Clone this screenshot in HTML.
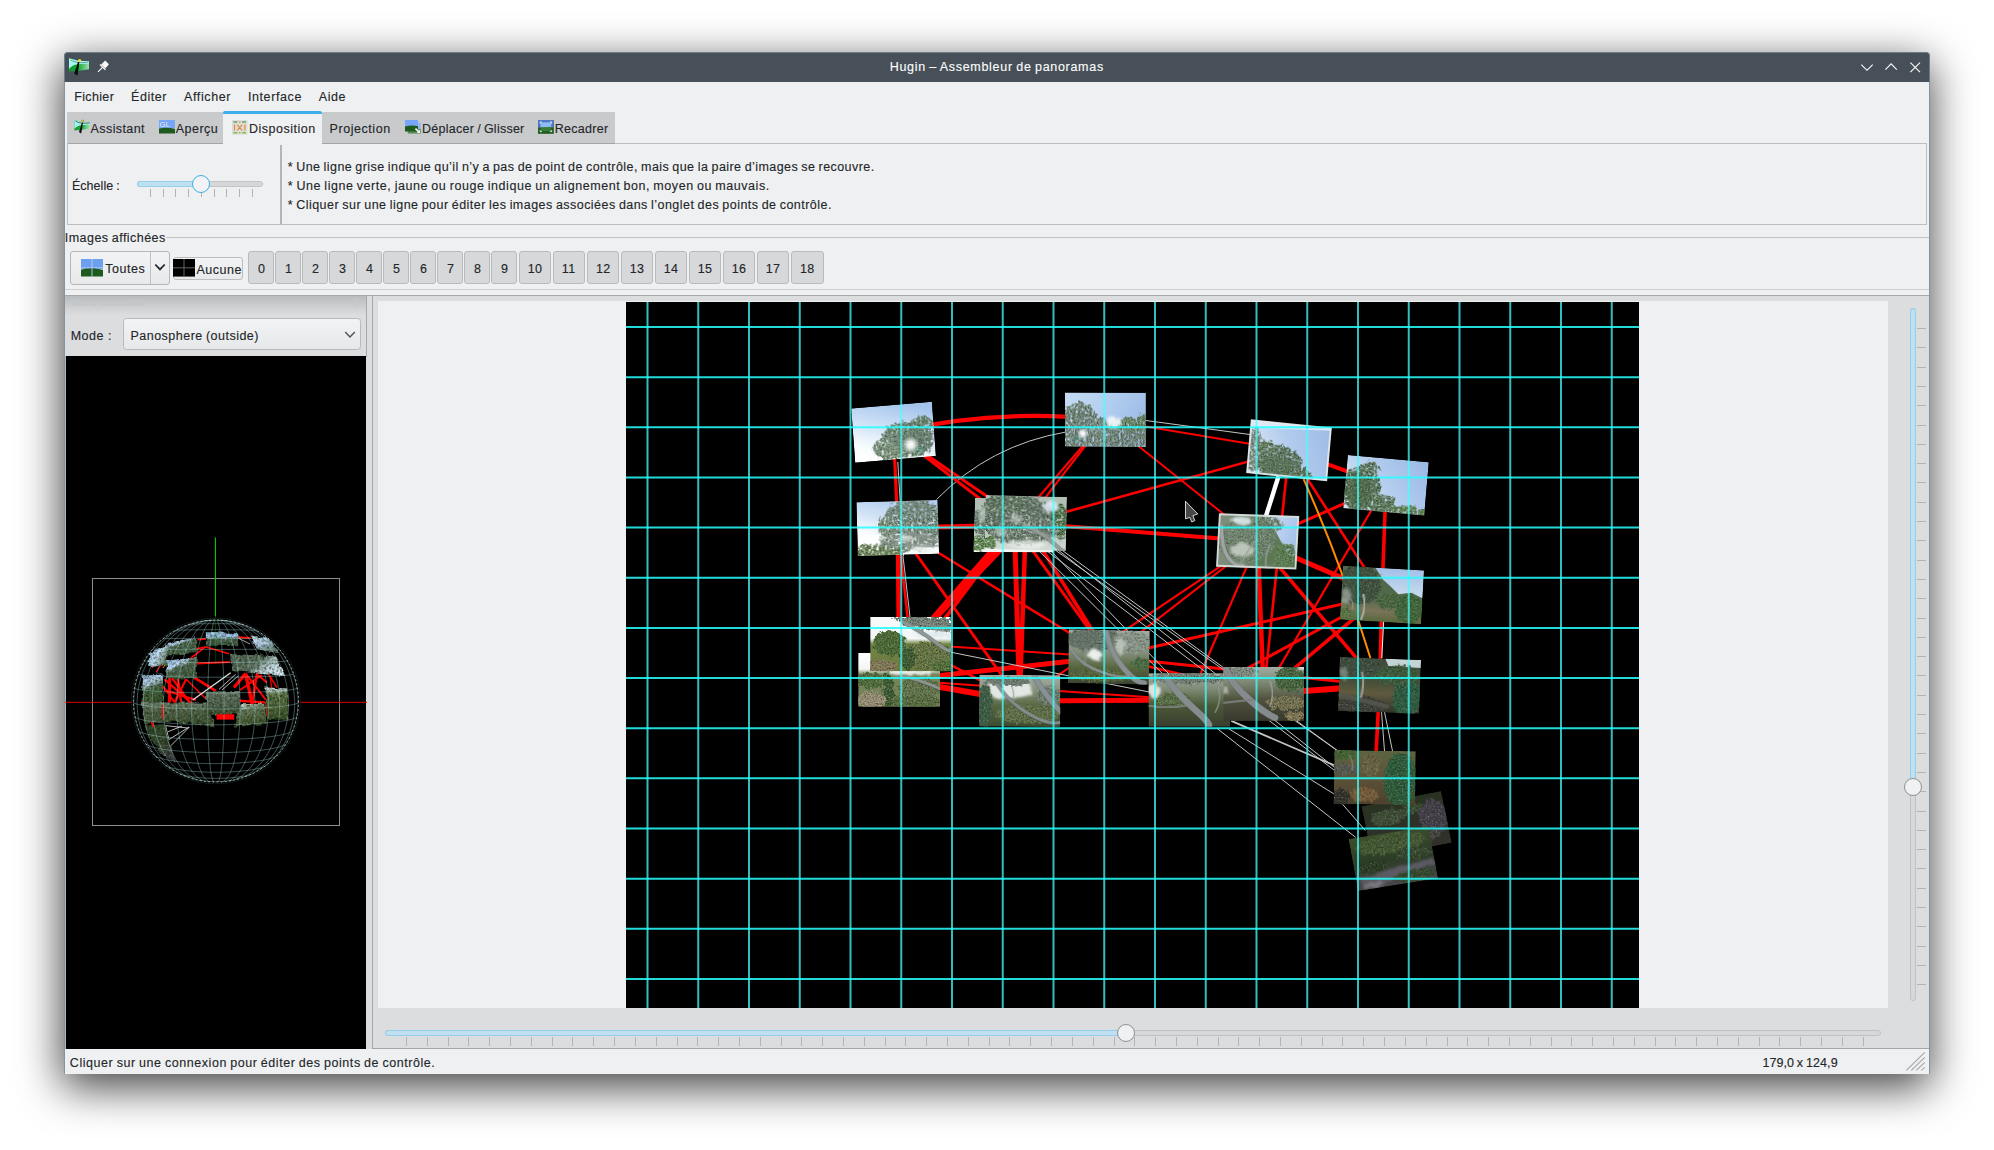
<!DOCTYPE html>
<html>
<head>
<meta charset="utf-8">
<title>Hugin</title>
<style>
*{box-sizing:border-box;margin:0;padding:0}
html,body{width:1994px;height:1150px;overflow:hidden;background:#fff}
body{position:relative;font-family:"Liberation Sans",sans-serif;font-size:12.5px;color:#232629}
.abs{position:absolute}
.t{position:absolute;white-space:nowrap;line-height:16px;height:16px;-webkit-text-stroke:0.13px #232629}
#win{position:absolute;left:64px;top:52px;width:1866px;height:1022px;background:#eff0f1;border-radius:4px 4px 0 0;border:1px solid #8693a0;
 box-shadow:-1px 12px 44px 1px rgba(0,0,0,.75)}
#title{position:absolute;left:64px;top:52px;width:1866px;height:29.5px;background:#475059;border-radius:4px 4px 0 0;border:1px solid #6e7c8b;border-bottom:none}
.btn{position:absolute;border:1px solid #b9babc;border-radius:3px;background:#d7d8da;height:33px;top:250.7px}
svg{position:absolute;overflow:visible}
</style>
</head>
<body>
<div id="win"></div>
<div id="title"></div>

<div class="t" style="left:889.70px;top:59.17px;letter-spacing:0.70px;word-spacing:-0.7px;color:#fcfcfc;-webkit-text-stroke-color:#fcfcfc;">Hugin – Assembleur de panoramas</div>
<svg style="left:1855px;top:56px" width="72" height="22" viewBox="1855 56 72 22" fill="none" stroke="#fcfcfc" stroke-width="1.1">
<path d="M1861.3 64.6 L1867 70.3 L1872.7 64.6"/>
<path d="M1885.4 69.6 L1891.1 63.9 L1896.8 69.6"/>
<path d="M1910.4 62.6 L1920 72.2 M1920 62.6 L1910.4 72.2"/>
</svg>
<svg style="left:68px;top:56px" width="44" height="22" viewBox="68 56 44 22">
<defs><linearGradient id="ig" x1="0" x2="1"><stop offset="0" stop-color="#0a9a28"/><stop offset=".45" stop-color="#10a530"/><stop offset="1" stop-color="#a0e0b0"/></linearGradient></defs>
<path d="M69 58.2 L78.5 60.8 L89 61.2 L89 69.3 L78 71 L69 71.6 Z" fill="url(#ig)"/>
<path d="M69 58.2 L78.5 60.8 L89 61.2 L89 63.6 L78 64.2 C74 64.6 71 66.5 69 69 Z" fill="#a8f4f0"/>
<path d="M70.5 59.8 C73 61.5 76 62.3 79 62.6 C82 62.9 86 62.5 88.5 62" stroke="#2a6a6a" stroke-width=".6" fill="none"/>
<path d="M79.4 62 L77.4 75.8 L75.8 74.6 L74.2 73.4 L78 62 Z" fill="#0a0a0a"/>
<circle cx="79.6" cy="60.4" r="1.5" fill="#f0e020"/>
<g fill="#fcfcfc"><path d="M105.2 60.6 L108.9 64.3 L105.3 68.6 L101.2 64.6 Z"/><path d="M99.6 64.9 L100.5 64 L105.9 69.4 L105 70.3 Z"/><path d="M102.1 66.9 L103 67.8 L98.3 72.3 L97.6 71.6 Z"/></g>
</svg>
<div class="t" style="left:74.20px;top:88.67px;letter-spacing:0.35px;">Fichier</div>
<div class="t" style="left:131.00px;top:88.67px;letter-spacing:0.56px;">Éditer</div>
<div class="t" style="left:184.00px;top:88.67px;letter-spacing:0.61px;">Afficher</div>
<div class="t" style="left:247.90px;top:88.67px;letter-spacing:0.60px;">Interface</div>
<div class="t" style="left:318.80px;top:88.67px;letter-spacing:0.57px;">Aide</div>
<div class="abs" style="left:67.00px;top:111.50px;width:548.00px;height:32.00px;background:#c9cacc;"></div>
<div class="abs" style="left:67.00px;top:143.00px;width:548.00px;height:1.00px;background:#a4a5a7;"></div>
<div class="abs" style="left:615.00px;top:143.00px;width:1312.00px;height:1.00px;background:#bcbdbf;"></div>
<div class="abs" style="left:67.00px;top:143.00px;width:1.00px;height:82.00px;background:#bcbdbf;"></div>
<div class="abs" style="left:1926.00px;top:143.00px;width:1.00px;height:82.00px;background:#bcbdbf;"></div>
<div class="abs" style="left:67.00px;top:224.00px;width:1860.00px;height:1.00px;background:#bcbdbf;"></div>
<div class="abs" style="left:223.00px;top:111.50px;width:99.00px;height:33.00px;background:#eff0f1;"></div>
<div class="abs" style="left:223.00px;top:111.20px;width:99.00px;height:3.00px;background:#3daee9;border-radius:2px 2px 0 0"></div>
<div class="t" style="left:90.60px;top:120.67px;letter-spacing:0.40px;">Assistant</div>
<div class="t" style="left:175.80px;top:120.67px;letter-spacing:0.48px;">Aperçu</div>
<div class="t" style="left:248.90px;top:120.67px;letter-spacing:0.52px;">Disposition</div>
<div class="t" style="left:329.60px;top:120.67px;letter-spacing:0.55px;">Projection</div>
<div class="t" style="left:422.10px;top:120.67px;letter-spacing:0.25px;word-spacing:-0.7px;">Déplacer / Glisser</div>
<div class="t" style="left:554.80px;top:120.67px;letter-spacing:0.28px;">Recadrer</div>
<svg style="left:73.6px;top:119.4px" width="16.4" height="15" viewBox="0 0 16.4 15">
<defs><linearGradient id="ig2" x1="0" x2="1"><stop offset="0" stop-color="#18a030"/><stop offset=".5" stop-color="#22a83c"/><stop offset="1" stop-color="#a8e4b4"/></linearGradient></defs>
<path d="M.4 1 L8 3 L16 3.4 L16 9.6 L8 10.8 L.4 11.4 Z" fill="url(#ig2)"/><path d="M.4 1 L8 3 L16 3.4 L16 5.6 L9 6 C5.5 6.2 2.6 7.6 .4 9.6 Z" fill="#a6f2ec"/>
<path d="M1.6 2.2 C4 3.6 7 4.3 9.4 4.3 C12 4.3 14.5 4 15.8 3.8" stroke="#1c3c3c" stroke-width=".7" fill="none"/>
<path d="M9 3.4 L7.2 14.6 L6 13.8 L5 13 L8 3.6 Z" fill="#0a0a0a"/><circle cx="8.8" cy="2.2" r="1.15" fill="#f0e020" stroke="#222" stroke-width=".3"/></svg>
<svg style="left:159px;top:120.4px" width="16" height="13.4" viewBox="0 0 16 13.4">
<rect width="16" height="8.6" fill="#78a6f6"/><path d="M0 8.6 C5 7.4 10 7.4 16 8.9 V13.4 H0Z" fill="#1e5a1e"/>
<text x=".6" y="6.6" font-family="Liberation Sans" font-size="7.6" fill="#e4eeff">GL</text></svg>
<svg style="left:232.2px;top:119.6px" width="15.4" height="14.8" viewBox="0 0 16 15">
<rect width="16" height="15" fill="#dcdcd6"/>
<g fill="#70c040"><rect x="1.5" y="1.4" width="4" height="1.4"/><rect x="10.5" y="1.4" width="4" height="1.4"/><rect x="1.5" y="12.4" width="4" height="1.4"/><rect x="10.5" y="12.4" width="4" height="1.4"/></g>
<g fill="#6a94d8"><rect x="1.5" y="1" width="4" height=".7"/><rect x="10.5" y="1" width="4" height=".7"/></g>
<g fill="#e89040"><rect x="7.2" y="1.2" width="1.6" height="1.4"/><rect x="7.2" y="12.4" width="1.6" height="1.4"/></g>
<g stroke="#e08838" stroke-width="1.1" fill="none"><path d="M2.6 4.6V10.8M13.4 4.6V10.8M5.4 4.8L10.6 10.6M10.6 4.8L5.4 10.6"/></g></svg>
<svg style="left:405px;top:120.1px" width="16" height="13.9" viewBox="0 0 16 13.9">
<rect x="2.8" y="2.4" width="13" height="7" fill="#94b8ee"/><rect x="2.8" y="9" width="13" height="4.6" fill="#5c8c5c"/>
<rect x="0" y="0" width="13" height="7.6" fill="#78a6f6"/><path d="M0 6.6 C4 5.4 9 5.2 13 6.2 V11.6 H0Z" fill="#1e5a1e"/>
<path d="M10.4 8.6 L13.4 11.4" stroke="#f6f6f6" stroke-width="1.7"/><path d="M15 12.9 V9.6 L11.8 12.9 Z" fill="#f6f6f6"/></svg>
<svg style="left:538px;top:120.1px" width="15.8" height="13.8" viewBox="0 0 16 14">
<rect width="16" height="14" fill="#1e5a1e"/><rect x="0" y="0" width="16" height="7.6" fill="#5278c4"/>
<rect x="2.6" y="2.4" width="10.8" height="5.2" fill="#8ebcfc"/><path d="M2.6 7.6 L13.4 6.8 V11.4 H2.6Z" fill="#3a7a3a"/>
<path d="M2.2 3.6V2H4M12 2H13.8V3.6M13.8 10.2V11.8H12M4 11.8H2.2V10.2" fill="none" stroke="#e8f0fc" stroke-width=".9"/></svg>
<div class="abs" style="left:280.20px;top:145.00px;width:1.60px;height:79.00px;background:#b4b5b7;"></div>
<div class="t" style="left:71.90px;top:177.67px;letter-spacing:0.06px;word-spacing:-0.7px;">Échelle :</div>
<div class="t" style="left:287.70px;top:158.67px;letter-spacing:0.43px;word-spacing:-0.7px;">* Une ligne grise indique qu’il n’y a pas de point de contrôle, mais que la paire d’images se recouvre.</div>
<div class="t" style="left:287.70px;top:177.67px;letter-spacing:0.55px;word-spacing:-0.7px;">* Une ligne verte, jaune ou rouge indique un alignement bon, moyen ou mauvais.</div>
<div class="t" style="left:287.70px;top:196.67px;letter-spacing:0.46px;word-spacing:-0.7px;">* Cliquer sur une ligne pour éditer les images associées dans l’onglet des points de contrôle.</div>
<div class="abs" style="left:137.00px;top:181.00px;width:126.00px;height:6.00px;background:#d6d7d8;border-radius:3px;border:1px solid #c3c4c6"></div>
<div class="abs" style="left:137.00px;top:181.00px;width:66.00px;height:6.00px;background:#bfe0f0;border-radius:3px;border:1px solid #98cfea"></div>
<div class="abs" style="left:150.00px;top:188.50px;width:1.00px;height:8.50px;background:#b0b1b3;"></div>
<div class="abs" style="left:162.72px;top:188.50px;width:1.00px;height:8.50px;background:#b0b1b3;"></div>
<div class="abs" style="left:175.44px;top:188.50px;width:1.00px;height:8.50px;background:#b0b1b3;"></div>
<div class="abs" style="left:188.16px;top:188.50px;width:1.00px;height:8.50px;background:#b0b1b3;"></div>
<div class="abs" style="left:200.88px;top:188.50px;width:1.00px;height:8.50px;background:#b0b1b3;"></div>
<div class="abs" style="left:213.60px;top:188.50px;width:1.00px;height:8.50px;background:#b0b1b3;"></div>
<div class="abs" style="left:226.32px;top:188.50px;width:1.00px;height:8.50px;background:#b0b1b3;"></div>
<div class="abs" style="left:239.04px;top:188.50px;width:1.00px;height:8.50px;background:#b0b1b3;"></div>
<div class="abs" style="left:251.76px;top:188.50px;width:1.00px;height:8.50px;background:#b0b1b3;"></div>
<div class="abs" style="left:192.00px;top:175.00px;width:18.00px;height:18.00px;background:#f2f3f4;border-radius:50%;border:1.3px solid #3daee9"></div>
<div class="t" style="left:64.80px;top:229.67px;letter-spacing:0.46px;word-spacing:-0.7px;">Images affichées</div>
<div class="abs" style="left:166.00px;top:237.00px;width:1763.00px;height:1.00px;background:#c0c1c3;"></div>
<div class="abs" style="left:65.00px;top:289.00px;width:1864.00px;height:1.00px;background:#d0d1d3;"></div>
<div class="btn" style="left:69.8px;width:99.8px;height:34px;background:linear-gradient(#f2f3f4,#e8e9ea);border-color:#b6b7b9"></div>
<div class="abs" style="left:150.30px;top:251.70px;width:1.00px;height:32.00px;background:#c0c1c3;"></div>
<svg style="left:81px;top:259.3px" width="22" height="17.6" viewBox="0 0 23 19" preserveAspectRatio="none">
<rect width="23" height="11" fill="#6ea0f0"/><path d="M0 11.5 C7 9.5 15 9.5 23 11.8 V19 H0Z" fill="#1e5a1e"/><path d="M11.5 0V19M0 9.5H23" stroke="#b8d0f8" stroke-width="1.2" opacity=".75"/></svg>
<div class="t" style="left:105.20px;top:260.67px;letter-spacing:0.53px;">Toutes</div>
<svg style="left:153.6px;top:263.4px" width="12" height="9" viewBox="0 0 12 9"><path d="M1.3 1.5 L6 6.4 L10.7 1.5" fill="none" stroke="#232629" stroke-width="1.8"/></svg>
<div class="btn" style="left:172.5px;width:70px;top:256.5px;height:23px;background:linear-gradient(#f2f3f4,#e8e9ea);border-color:#bcbdbf"></div>
<svg style="left:173px;top:259.3px" width="22" height="17.6" viewBox="0 0 23 19" preserveAspectRatio="none"><rect width="23" height="19" fill="#000"/><path d="M11.5 0V19M0 9.5H23" stroke="#6a6a6a" stroke-width="1"/></svg>
<div class="t" style="left:196.50px;top:261.67px;letter-spacing:0.52px;">Aucune</div>
<div class="btn" style="left:248.30px;width:26.20px"></div>
<div class="t" style="left:258.00px;top:260.67px;letter-spacing:0.00px;">0</div>
<div class="btn" style="left:275.30px;width:26.20px"></div>
<div class="t" style="left:285.00px;top:260.67px;letter-spacing:0.00px;">1</div>
<div class="btn" style="left:302.30px;width:26.20px"></div>
<div class="t" style="left:312.00px;top:260.67px;letter-spacing:0.00px;">2</div>
<div class="btn" style="left:329.30px;width:26.20px"></div>
<div class="t" style="left:339.00px;top:260.67px;letter-spacing:0.00px;">3</div>
<div class="btn" style="left:356.30px;width:26.20px"></div>
<div class="t" style="left:366.00px;top:260.67px;letter-spacing:0.00px;">4</div>
<div class="btn" style="left:383.30px;width:26.20px"></div>
<div class="t" style="left:393.00px;top:260.67px;letter-spacing:0.00px;">5</div>
<div class="btn" style="left:410.30px;width:26.20px"></div>
<div class="t" style="left:420.00px;top:260.67px;letter-spacing:0.00px;">6</div>
<div class="btn" style="left:437.30px;width:26.20px"></div>
<div class="t" style="left:447.00px;top:260.67px;letter-spacing:0.00px;">7</div>
<div class="btn" style="left:464.30px;width:26.20px"></div>
<div class="t" style="left:474.00px;top:260.67px;letter-spacing:0.00px;">8</div>
<div class="btn" style="left:491.30px;width:26.20px"></div>
<div class="t" style="left:501.00px;top:260.67px;letter-spacing:0.00px;">9</div>
<div class="btn" style="left:518.50px;width:32.80px"></div>
<div class="t" style="left:527.75px;top:260.67px;letter-spacing:0.30px;">10</div>
<div class="btn" style="left:552.60px;width:32.80px"></div>
<div class="t" style="left:561.85px;top:260.67px;letter-spacing:0.30px;">11</div>
<div class="btn" style="left:586.70px;width:32.80px"></div>
<div class="t" style="left:595.95px;top:260.67px;letter-spacing:0.30px;">12</div>
<div class="btn" style="left:620.60px;width:32.80px"></div>
<div class="t" style="left:629.85px;top:260.67px;letter-spacing:0.30px;">13</div>
<div class="btn" style="left:654.60px;width:32.80px"></div>
<div class="t" style="left:663.85px;top:260.67px;letter-spacing:0.30px;">14</div>
<div class="btn" style="left:688.60px;width:32.80px"></div>
<div class="t" style="left:697.85px;top:260.67px;letter-spacing:0.30px;">15</div>
<div class="btn" style="left:722.50px;width:32.80px"></div>
<div class="t" style="left:731.75px;top:260.67px;letter-spacing:0.30px;">16</div>
<div class="btn" style="left:756.60px;width:32.80px"></div>
<div class="t" style="left:765.85px;top:260.67px;letter-spacing:0.30px;">17</div>
<div class="btn" style="left:790.80px;width:32.80px"></div>
<div class="t" style="left:800.05px;top:260.67px;letter-spacing:0.30px;">18</div>
<div class="abs" style="left:65.00px;top:295.00px;width:1864.00px;height:753.50px;background:#dcdddf;"></div>
<div class="abs" style="left:65.00px;top:295.00px;width:1864.00px;height:1.00px;background:#a8a9ab;"></div>
<div class="abs" style="left:65.00px;top:296.00px;width:301.50px;height:19.00px;background:linear-gradient(#b9bbbc,#dcdddf);"></div>
<div class="abs" style="left:366.00px;top:295.00px;width:1.00px;height:62.00px;background:#a8a9ab;"></div>
<div class="t" style="left:70.50px;top:294.97px;letter-spacing:0.07px;word-spacing:-0.7px;color:#c2c7cc;-webkit-text-stroke-color:#c2c7cc;font-size:10.4px">Vue d’ensemble</div>
<svg style="left:352px;top:298px" width="10" height="12" viewBox="0 0 10 12"><path d="M2.6 .8H6.6V5.6H2.6ZM.8 6.4H8.4M4.6 6.6V10.6" stroke="#c6cbd1" stroke-width="1" fill="none"/></svg>
<div class="t" style="left:70.70px;top:327.67px;letter-spacing:0.51px;">Mode :</div>
<div class="abs" style="left:122.50px;top:318.00px;width:238.00px;height:32.40px;background:linear-gradient(#f2f3f4,#e7e8e9);border:1px solid #b9babc;border-radius:3.5px"></div>
<div class="t" style="left:130.50px;top:327.67px;letter-spacing:0.48px;word-spacing:-0.7px;">Panosphere (outside)</div>
<svg style="left:343px;top:329px" width="14" height="11" viewBox="343 329 14 11"><path d="M345.2 332 L350 336.9 L354.8 332" fill="none" stroke="#4d5256" stroke-width="1.4"/></svg>
<div class="abs" style="left:65.00px;top:356.00px;width:1.00px;height:692.50px;background:#b4b4b4;"></div>
<div class="abs" style="left:66.00px;top:356.00px;width:300.40px;height:692.50px;background:#000;"></div>
<svg style="left:65px;top:356px" width="302" height="692" viewBox="65 356 302 692">
<defs><clipPath id="sc"><ellipse cx="215.9" cy="701" rx="83" ry="81.423"/></clipPath>

<filter id="sgr" x="-5%" y="-5%" width="110%" height="110%" color-interpolation-filters="sRGB">
<feTurbulence type="fractalNoise" baseFrequency="0.16" numOctaves="2" seed="4" result="n"/>
<feDisplacementMap in="SourceGraphic" in2="n" scale="5" xChannelSelector="R" yChannelSelector="G" result="d"/>
<feTurbulence type="fractalNoise" baseFrequency="0.4" numOctaves="2" seed="9" result="n2"/>
<feColorMatrix in="n2" type="matrix" values="0 0 0 0 0.85  0 0 0 0 0.9  0 0 0 0 0.85  0.8 0 0 0 -0.4" result="hl"/>
<feComposite in="hl" in2="d" operator="in" result="hl2"/>
<feColorMatrix in="n2" type="matrix" values="0 0 0 0 0.05  0 0 0 0 0.12  0 0 0 0 0.04  0 1.5 0 0 -0.6" result="sh"/>
<feComposite in="sh" in2="d" operator="in" result="sh2"/>
<feMerge result="m"><feMergeNode in="d"/><feMergeNode in="sh2"/><feMergeNode in="hl2"/></feMerge>
<feGaussianBlur in="m" stdDeviation="0.6"/>
</filter>
<linearGradient id="sk1" x1="0" y1="0" x2=".7" y2="1"><stop offset="0" stop-color="#90b5e8"/><stop offset=".38" stop-color="#bcd4f0"/><stop offset=".5" stop-color="#4f6852"/><stop offset="1" stop-color="#3a5433"/></linearGradient>
<linearGradient id="sk1b" x1="0" y1="0" x2="1" y2=".6"><stop offset="0" stop-color="#91b5e8"/><stop offset=".6" stop-color="#c6dcf2"/><stop offset="1" stop-color="#5b735f"/></linearGradient>
<linearGradient id="sk2" x1="0" y1="0" x2="0" y2="1"><stop offset="0" stop-color="#70816e"/><stop offset=".35" stop-color="#516245"/><stop offset="1" stop-color="#394928"/></linearGradient>
<linearGradient id="sk2b" x1="0" y1="0" x2=".3" y2="1"><stop offset="0" stop-color="#e4eae8"/><stop offset=".35" stop-color="#667859"/><stop offset="1" stop-color="#3e5129"/></linearGradient>
<linearGradient id="sk3" x1="0" y1="0" x2=".3" y2="1"><stop offset="0" stop-color="#91b5e6"/><stop offset=".4" stop-color="#b8d0e6"/><stop offset=".55" stop-color="#445f3f"/><stop offset="1" stop-color="#355228"/></linearGradient>
<linearGradient id="sk4" x1="0" y1="0" x2="0" y2="1"><stop offset="0" stop-color="#a3c5ee"/><stop offset=".34" stop-color="#99bde2"/><stop offset=".46" stop-color="#4a624c"/><stop offset="1" stop-color="#3b523c"/></linearGradient>
<linearGradient id="sk5" x1="0" y1="0" x2=".4" y2="1"><stop offset="0" stop-color="#d3e4f6"/><stop offset=".6" stop-color="#acc6e4"/><stop offset="1" stop-color="#5b7060"/></linearGradient>
<linearGradient id="sk6" x1="0" y1="0" x2="1" y2=".5"><stop offset="0" stop-color="#4f6352"/><stop offset=".55" stop-color="#5b6e5c"/><stop offset=".8" stop-color="#bcced6"/><stop offset="1" stop-color="#d7e6f0"/></linearGradient>
<linearGradient id="sk7" x1="0" y1="0" x2="0" y2="1"><stop offset="0" stop-color="#deeaee"/><stop offset=".22" stop-color="#5b6e3f"/><stop offset="1" stop-color="#394f25"/></linearGradient>
<linearGradient id="sk8" x1="0" y1="0" x2="0" y2="1"><stop offset="0" stop-color="#677867"/><stop offset=".5" stop-color="#546350"/><stop offset="1" stop-color="#394c28"/></linearGradient>
<linearGradient id="sk9" x1="0" y1="0" x2=".3" y2="1"><stop offset="0" stop-color="#2a4421"/><stop offset=".6" stop-color="#354329"/><stop offset="1" stop-color="#3c3c42"/></linearGradient>

</defs>
<rect x="92.5" y="578.5" width="247" height="247" fill="none" stroke="#8e8e8e" stroke-width="1"/>
<path d="M215.4 537.5V616.5" stroke="#00e000" stroke-width="1"/>
<path d="M65 702.3H131.5M300.5 702.3H367" stroke="#e00000" stroke-width="1"/>
<g clip-path="url(#sc)">
<path d="M196.0 648.8 L205.9 647.1" stroke="#ff0000" stroke-width="1.6"/>
<path d="M205.9 647.1 L229.0 653.7" stroke="#ff0000" stroke-width="1.6"/>
<path d="M196.8 663.6 L229.9 662.0" stroke="#ff0000" stroke-width="2"/>
<path d="M238.1 637.2 L250.5 638.0" stroke="#ff0000" stroke-width="2"/>
<path d="M191.0 658.0 L205.9 646.3" stroke="#ff0000" stroke-width="1.6"/>
<path d="M197.6 639.7 L205.9 638.9" stroke="#ff0000" stroke-width="1.6"/>
<path d="M164.6 679.3 L192.7 704.1" stroke="#ff0000" stroke-width="2.4"/>
<path d="M169.6 677.7 L169.6 702.5" stroke="#ff0000" stroke-width="3"/>
<path d="M177.8 677.7 L181.1 702.5" stroke="#ff0000" stroke-width="2.4"/>
<path d="M186.1 679.3 L174.5 702.5" stroke="#ff0000" stroke-width="2.2"/>
<path d="M164.6 690.0 L196.0 700.0" stroke="#ff0000" stroke-width="2"/>
<path d="M172.0 678.0 L190.0 703.0" stroke="#ff0000" stroke-width="2.2"/>
<path d="M163.0 686.0 L175.0 703.0" stroke="#ff0000" stroke-width="2"/>
<path d="M194.3 677.7 L215.8 690.9" stroke="#ff0000" stroke-width="2.6"/>
<path d="M186.0 679.0 L206.0 699.0" stroke="#ff0000" stroke-width="1.6"/>
<path d="M152.0 668.0 L158.0 660.0" stroke="#ff0000" stroke-width="1.2"/>
<path d="M156.0 672.0 L163.0 662.0" stroke="#ff0000" stroke-width="1.2"/>
<path d="M150.0 700.0 L163.0 688.0" stroke="#ff0000" stroke-width="1.4"/>
<path d="M234.0 687.6 L245.6 673.6" stroke="#ff0000" stroke-width="3.2"/>
<path d="M245.6 673.6 L252.2 704.1" stroke="#ff0000" stroke-width="3.4"/>
<path d="M257.1 672.7 L252.2 704.1" stroke="#ff0000" stroke-width="2.4"/>
<path d="M257.1 674.4 L267.0 682.6" stroke="#ff0000" stroke-width="2"/>
<path d="M268.7 674.4 L277.0 687.6" stroke="#ff0000" stroke-width="1.6"/>
<path d="M239.8 700.8 L265.4 702.5" stroke="#ff0000" stroke-width="2.4"/>
<path d="M246.0 674.0 L266.0 700.0" stroke="#ff0000" stroke-width="2"/>
<path d="M262.0 675.0 L240.0 690.0" stroke="#ff0000" stroke-width="1.8"/>
<path d="M270.0 676.0 L272.0 690.0" stroke="#ff0000" stroke-width="1.2"/>
<path d="M266.0 705.0 L267.0 716.0" stroke="#ff0000" stroke-width="1.4"/>
<path d="M163.0 668.0 L168.0 660.0" stroke="#ff8c00" stroke-width="1"/>
<path d="M151.0 700.0 L153.0 694.0" stroke="#ff8c00" stroke-width="1"/>
<path d="M192.7 700.0 L230.7 672.7" stroke="#e6e6e6" stroke-width="1.2"/>
<path d="M219.0 689.3 L235.6 674.4" stroke="#e6e6e6" stroke-width="0.8"/>
<path d="M222.0 690.0 L238.0 676.0" stroke="#e6e6e6" stroke-width="0.8"/>
<path d="M165.5 725.6 L187.7 728.0" stroke="#e6e6e6" stroke-width="0.8"/>
<path d="M167.5 732.0 L182.0 726.0" stroke="#e6e6e6" stroke-width="0.8"/>
<path d="M169.0 739.5 L189.0 727.0" stroke="#e6e6e6" stroke-width="0.8"/>
<path d="M167.0 749.5 L189.5 727.0" stroke="#e6e6e6" stroke-width="0.8"/>
<path d="M165.5 725.6 L169.0 740.0" stroke="#e6e6e6" stroke-width="0.8"/>
<path d="M238.0 638.0 L250.0 644.0" stroke="#e6e6e6" stroke-width="0.7"/>
<g filter="url(#sgr)">
<polygon points="150.6,652.1 167.9,644.6 167.1,664.5 148.1,666.1" fill="url(#sk1b)" opacity="1"/>
<polygon points="143.1,676.0 163.0,674.4 163.0,702.5 141.5,702.5" fill="url(#sk3)" opacity="1"/>
<polygon points="167.9,643.0 196.0,637.2 196.8,652.9 166.3,655.4" fill="url(#sk1)" opacity="1"/>
<polygon points="167.1,660.3 196.8,657.9 196.8,677.7 166.3,679.3" fill="url(#sk1)" opacity="1"/>
<polygon points="205.9,632.3 238.1,633.0 238.1,646.3 205.9,645.5" fill="url(#sk4)" opacity="1"/>
<polygon points="250.5,635.6 268.7,638.9 278.6,652.9 257.1,649.6" fill="url(#sk5)" opacity="1"/>
<polygon points="229.9,653.7 275.3,656.2 285.2,676.0 232.3,671.1" fill="url(#sk6)" opacity="1"/>
<polygon points="265.4,687.6 286.9,688.4 288.5,719.8 267.0,719.0" fill="url(#sk7)" opacity="1"/>
<polygon points="141.5,702.5 205.9,702.5 215.8,726.4 164.6,720.7 144.8,724.0" fill="url(#sk2)" opacity="1"/>
<polygon points="239.8,704.1 265.4,704.1 265.4,724.0 234.0,726.4" fill="url(#sk2b)" opacity="1"/>
<polygon points="205.9,691.7 239.8,690.9 239.8,714.0 205.9,714.9" fill="url(#sk8)" opacity="1"/>
<polygon points="144.8,725.6 164.6,724.0 170.0,745.0 176.2,763.6 161.3,753.7 150.0,738.0" fill="url(#sk9)" opacity="1"/>
</g>
<rect x="216.6" y="714.2" width="17.6" height="5.4" fill="#ff0000"/>
<path d="M162.5 705 V718.5" stroke="#ff0000" stroke-width="1.4"/><path d="M151.5 722 L153.5 727" stroke="#ff0000" stroke-width="2"/>
<path d="M193.3 779.4L194.6 779.7L195.9 780.0L197.4 780.2L198.9 780.5L200.6 780.7L202.3 780.9L204.1 781.1L206.0 781.3L207.9 781.4L209.9 781.5L211.9 781.6L213.9 781.6L215.9 781.6L217.9 781.6L219.9 781.6L221.9 781.5L223.9 781.4L225.8 781.3L227.7 781.1L229.5 780.9L231.2 780.7L232.9 780.5L234.4 780.2L235.9 780.0L237.2 779.7L238.5 779.4M178.2 773.5L179.5 774.0L180.9 774.5L182.5 775.0L184.3 775.4L186.2 775.9L188.4 776.3L190.7 776.6L193.1 777.0L195.6 777.3L198.3 777.5L201.1 777.8L203.9 778.0L206.9 778.1L209.9 778.2L212.9 778.3L215.9 778.3L218.9 778.3L221.9 778.2L224.9 778.1L227.9 778.0L230.7 777.8L233.5 777.5L236.2 777.3L238.7 777.0L241.1 776.6L243.4 776.3L245.6 775.9L247.5 775.4L249.3 775.0L250.9 774.5L252.3 774.0L253.6 773.5M164.7 765.1L165.7 765.7L167.0 766.4L168.6 767.0L170.4 767.6L172.4 768.2L174.7 768.7L177.2 769.3L180.0 769.8L182.9 770.2L186.1 770.6L189.4 771.0L192.9 771.3L196.5 771.6L200.2 771.9L204.1 772.0L208.0 772.2L211.9 772.3L215.9 772.3L219.9 772.3L223.8 772.2L227.7 772.0L231.6 771.9L235.3 771.6L238.9 771.3L242.4 771.0L245.7 770.6L248.9 770.2L251.8 769.8L254.6 769.3L257.1 768.7L259.4 768.2L261.4 767.6L263.2 767.0L264.8 766.4L266.1 765.7L267.1 765.1M153.7 754.9L154.5 755.6L155.7 756.3L157.2 757.0L159.0 757.7L161.1 758.4L163.5 759.1L166.2 759.7L169.2 760.3L172.5 760.8L176.0 761.3L179.8 761.8L183.8 762.2L188.0 762.6L192.4 762.9L196.9 763.2L201.5 763.4L206.3 763.5L211.1 763.6L215.9 763.7L220.7 763.6L225.5 763.5L230.3 763.4L234.9 763.2L239.4 762.9L243.8 762.6L248.0 762.2L252.0 761.8L255.8 761.3L259.3 760.8L262.6 760.3L265.6 759.7L268.3 759.1L270.7 758.4L272.8 757.7L274.6 757.0L276.1 756.3L277.3 755.6L278.1 754.9M145.2 743.6L146.1 744.3L147.4 745.1L149.0 745.8L151.0 746.5L153.3 747.2L156.1 747.8L159.1 748.5L162.5 749.1L166.2 749.7L170.2 750.2L174.6 750.7L179.1 751.1L183.9 751.5L188.9 751.8L194.1 752.1L199.4 752.3L204.9 752.5L210.4 752.6L215.9 752.6L221.4 752.6L226.9 752.5L232.4 752.3L237.7 752.1L242.9 751.8L247.9 751.5L252.7 751.1L257.2 750.7L261.6 750.2L265.6 749.7L269.3 749.1L272.7 748.5L275.7 747.8L278.5 747.2L280.8 746.5L282.8 745.8L284.4 745.1L285.7 744.3L286.6 743.6M138.4 730.2L138.9 730.9L139.8 731.6L141.2 732.3L142.9 732.9L145.0 733.6L147.5 734.3L150.5 734.9L153.8 735.5L157.4 736.1L161.5 736.7L165.9 737.2L170.6 737.6L175.6 738.1L180.8 738.4L186.3 738.8L192.0 739.0L197.8 739.2L203.8 739.4L209.8 739.5L215.9 739.5L222.0 739.5L228.0 739.4L234.0 739.2L239.8 739.0L245.5 738.8L251.0 738.4L256.2 738.1L261.2 737.6L265.9 737.2L270.3 736.7L274.4 736.1L278.0 735.5L281.3 734.9L284.3 734.3L286.8 733.6L288.9 732.9L290.6 732.3L292.0 731.6L292.9 730.9L293.4 730.2M134.5 716.5L135.0 717.1L135.9 717.7L137.2 718.3L139.0 718.9L141.2 719.5L143.9 720.1L146.9 720.7L150.4 721.2L154.2 721.8L158.5 722.2L163.1 722.7L168.0 723.1L173.3 723.5L178.8 723.8L184.6 724.1L190.6 724.3L196.8 724.5L203.1 724.7L209.5 724.8L215.9 724.8L222.3 724.8L228.7 724.7L235.0 724.5L241.2 724.3L247.2 724.1L253.0 723.8L258.5 723.5L263.8 723.1L268.7 722.7L273.3 722.2L277.6 721.8L281.4 721.2L284.9 720.7L287.9 720.1L290.6 719.5L292.8 718.9L294.6 718.3L295.9 717.7L296.8 717.1L297.3 716.5M133.0 702.2L133.5 702.8L134.4 703.3L135.8 703.8L137.6 704.3L139.8 704.8L142.5 705.2L145.6 705.7L149.1 706.1L153.1 706.6L157.4 707.0L162.1 707.3L167.1 707.7L172.5 708.0L178.1 708.3L184.0 708.5L190.1 708.7L196.4 708.8L202.8 709.0L209.3 709.0L215.9 709.0L222.5 709.0L229.0 709.0L235.4 708.8L241.7 708.7L247.8 708.5L253.7 708.3L259.3 708.0L264.7 707.7L269.7 707.3L274.4 707.0L278.7 706.6L282.7 706.1L286.2 705.7L289.3 705.2L292.0 704.8L294.2 704.3L296.0 703.8L297.4 703.3L298.3 702.8L298.8 702.2M134.1 687.9L134.6 688.3L135.6 688.7L136.9 689.1L138.7 689.4L140.9 689.8L143.6 690.1L146.6 690.5L150.1 690.8L154.0 691.1L158.2 691.4L162.9 691.7L167.8 691.9L173.1 692.2L178.7 692.4L184.5 692.6L190.5 692.7L196.7 692.8L203.0 692.9L209.4 692.9L215.9 693.0L222.4 692.9L228.8 692.9L235.1 692.8L241.3 692.7L247.3 692.6L253.1 692.4L258.7 692.2L264.0 691.9L268.9 691.7L273.6 691.4L277.8 691.1L281.7 690.8L285.2 690.5L288.2 690.1L290.9 689.8L293.1 689.4L294.9 689.1L296.2 688.7L297.2 688.3L297.7 687.9M137.7 673.7L137.8 674.0L138.3 674.2L139.2 674.5L140.6 674.7L142.3 674.9L144.4 675.2L147.0 675.4L149.9 675.6L153.3 675.8L157.0 676.0L161.0 676.2L165.5 676.4L170.2 676.6L175.2 676.7L180.5 676.8L186.0 677.0L191.8 677.1L197.7 677.1L203.7 677.2L209.8 677.2L215.9 677.2L222.0 677.2L228.1 677.2L234.1 677.1L240.0 677.1L245.8 677.0L251.3 676.8L256.6 676.7L261.6 676.6L266.3 676.4L270.8 676.2L274.8 676.0L278.5 675.8L281.9 675.6L284.8 675.4L287.4 675.2L289.5 674.9L291.2 674.7L292.6 674.5L293.5 674.2L294.0 674.0L294.1 673.7M143.8 660.7L143.9 660.8L144.4 661.0L145.3 661.1L146.6 661.2L148.2 661.3L150.2 661.5L152.6 661.6L155.4 661.7L158.4 661.8L161.9 661.9L165.6 662.0L169.7 662.1L174.1 662.2L178.7 662.2L183.5 662.3L188.6 662.4L193.8 662.4L199.2 662.4L204.7 662.5L210.3 662.5L215.9 662.5L221.5 662.5L227.1 662.5L232.6 662.4L238.0 662.4L243.2 662.4L248.3 662.3L253.1 662.2L257.7 662.2L262.1 662.1L266.2 662.0L269.9 661.9L273.4 661.8L276.4 661.7L279.2 661.6L281.6 661.5L283.6 661.3L285.2 661.2L286.5 661.1L287.4 661.0L287.9 660.8L288.0 660.7M152.1 649.0L152.3 649.0L152.8 649.0L153.6 649.0L154.8 649.1L156.3 649.1L158.1 649.1L160.2 649.2L162.7 649.2L165.4 649.2L168.5 649.2L171.8 649.3L175.4 649.3L179.2 649.3L183.3 649.3L187.6 649.3L192.0 649.3L196.6 649.4L201.3 649.4L206.1 649.4L211.0 649.4L215.9 649.4L220.8 649.4L225.7 649.4L230.5 649.4L235.2 649.4L239.8 649.3L244.2 649.3L248.5 649.3L252.6 649.3L256.4 649.3L260.0 649.3L263.3 649.2L266.4 649.2L269.1 649.2L271.6 649.2L273.7 649.1L275.5 649.1L277.0 649.1L278.2 649.0L279.0 649.0L279.5 649.0L279.7 649.0M162.4 638.8L162.6 638.8L163.1 638.7L163.8 638.7L164.9 638.7L166.2 638.6L167.7 638.6L169.6 638.6L171.6 638.5L174.0 638.5L176.5 638.5L179.3 638.5L182.3 638.4L185.5 638.4L188.9 638.4L192.5 638.4L196.1 638.4L199.9 638.4L203.9 638.3L207.8 638.3L211.9 638.3L215.9 638.3L219.9 638.3L224.0 638.3L227.9 638.3L231.9 638.4L235.7 638.4L239.3 638.4L242.9 638.4L246.3 638.4L249.5 638.4L252.5 638.5L255.3 638.5L257.8 638.5L260.2 638.5L262.2 638.6L264.1 638.6L265.6 638.6L266.9 638.7L268.0 638.7L268.7 638.7L269.2 638.8L269.4 638.8M174.3 630.5L174.5 630.5L174.9 630.4L175.6 630.4L176.4 630.3L177.5 630.2L178.7 630.2L180.2 630.1L181.8 630.1L183.7 630.0L185.7 630.0L187.8 629.9L190.2 629.9L192.6 629.9L195.2 629.8L198.0 629.8L200.8 629.8L203.7 629.8L206.7 629.7L209.7 629.7L212.8 629.7L215.9 629.7L219.0 629.7L222.1 629.7L225.1 629.7L228.1 629.8L231.0 629.8L233.8 629.8L236.6 629.8L239.2 629.9L241.6 629.9L244.0 629.9L246.1 630.0L248.1 630.0L250.0 630.1L251.6 630.1L253.1 630.2L254.3 630.2L255.4 630.3L256.2 630.4L256.9 630.4L257.3 630.5L257.5 630.5M187.7 624.4L188.0 624.4L188.5 624.3L189.1 624.3L189.8 624.2L190.7 624.2L191.7 624.1L192.9 624.1L194.1 624.0L195.5 624.0L197.0 623.9L198.6 623.9L200.2 623.8L202.0 623.8L203.9 623.8L205.8 623.8L207.7 623.7L209.7 623.7L211.8 623.7L213.8 623.7L215.9 623.7L218.0 623.7L220.0 623.7L222.1 623.7L224.1 623.7L226.0 623.8L227.9 623.8L229.8 623.8L231.6 623.8L233.2 623.9L234.8 623.9L236.3 624.0L237.7 624.0L238.9 624.1L240.1 624.1L241.1 624.2L242.0 624.2L242.7 624.3L243.3 624.3L243.8 624.4L244.1 624.4M201.8 620.8L202.1 620.7L202.4 620.7L202.8 620.7L203.2 620.6L203.8 620.6L204.4 620.6L205.0 620.5L205.7 620.5L206.5 620.5L207.3 620.5L208.1 620.4L209.0 620.4L209.9 620.4L210.9 620.4L211.8 620.4L212.8 620.4L213.8 620.4L214.9 620.4L215.9 620.4L216.9 620.4L218.0 620.4L219.0 620.4L220.0 620.4L220.9 620.4L221.9 620.4L222.8 620.4L223.7 620.4L224.5 620.5L225.3 620.5L226.1 620.5L226.8 620.5L227.4 620.6L228.0 620.6L228.6 620.6L229.0 620.7L229.4 620.7L229.7 620.7L230.0 620.8M155.8 757.1L152.0 753.0L148.6 748.5L145.4 743.8L142.6 738.8L140.2 733.7L138.1 728.3L136.4 722.9L135.2 717.3L134.3 711.6L133.8 705.8L133.7 700.0L134.1 694.2L134.8 688.4L136.0 682.7L137.6 677.0L139.6 671.5L141.9 666.2L144.6 661.0L147.7 656.0L151.1 651.3L154.9 646.8L158.9 642.6L163.2 638.7L167.8 635.1L172.6 631.9L177.6 629.0L182.8 626.5L188.1 624.4L193.5 622.6L199.1 621.3M175.6 772.2L171.0 769.4L166.7 766.2L162.5 762.7L158.6 758.9L155.0 754.8L151.6 750.3L148.6 745.6L145.8 740.6L143.5 735.4L141.4 730.1L139.8 724.5L138.5 718.8L137.7 713.0L137.2 707.1L137.1 701.2L137.5 695.2L138.2 689.3L139.4 683.5L140.9 677.7L142.8 672.1L145.1 666.6L147.8 661.3L150.8 656.2L154.1 651.4L157.7 646.8L161.6 642.6L165.8 638.6L170.2 635.0L174.8 631.8L179.6 628.9L184.6 626.4L189.6 624.2L194.8 622.5L200.0 621.2L205.3 620.3M187.9 777.6L183.5 775.7L179.1 773.5L174.9 770.8L170.8 767.8L167.0 764.3L163.4 760.6L160.0 756.5L156.8 752.1L154.0 747.4L151.4 742.4L149.2 737.1L147.3 731.7L145.8 726.1L144.6 720.3L143.8 714.4L143.3 708.4L143.3 702.3L143.6 696.3L144.3 690.2L145.4 684.2L146.8 678.4L148.6 672.6L150.8 667.0L153.3 661.6L156.1 656.4L159.2 651.5L162.5 646.9L166.2 642.6L170.1 638.6L174.1 634.9L178.4 631.6L182.8 628.7L187.3 626.2L192.0 624.1L196.7 622.4L201.5 621.1L206.3 620.2L211.1 619.7M195.6 779.9L191.6 778.5L187.7 776.8L183.8 774.6L180.1 772.1L176.6 769.1L173.2 765.8L170.0 762.1L166.9 758.0L164.2 753.7L161.6 748.9L159.4 743.9L157.4 738.7L155.7 733.2L154.3 727.5L153.2 721.6L152.5 715.6L152.1 709.5L152.1 703.4L152.4 697.2L153.0 691.0L153.9 684.9L155.2 678.9L156.8 673.1L158.8 667.4L161.0 661.9L163.5 656.6L166.2 651.6L169.2 646.9L172.5 642.5L175.9 638.5L179.5 634.8L183.2 631.5L187.1 628.6L191.1 626.1L195.1 624.0L199.3 622.3L203.4 621.0L207.6 620.1L211.8 619.7M202.6 781.4L199.3 780.6L196.1 779.3L192.8 777.7L189.7 775.7L186.6 773.2L183.7 770.3L180.9 767.1L178.2 763.4L175.7 759.4L173.4 755.0L171.3 750.3L169.4 745.3L167.7 740.0L166.3 734.5L165.2 728.7L164.3 722.8L163.7 716.7L163.4 710.5L163.3 704.3L163.6 698.0L164.1 691.8L164.9 685.6L166.0 679.5L167.3 673.5L168.9 667.7L170.8 662.1L172.8 656.8L175.1 651.7L177.6 646.9L180.3 642.5L183.1 638.4L186.1 634.7L189.2 631.4L192.4 628.5L195.6 626.0L199.0 623.9L202.4 622.2L205.8 620.9L209.2 620.1L212.5 619.7M206.1 781.8L203.6 781.1L201.2 780.0L198.8 778.4L196.5 776.4L194.2 774.1L192.0 771.3L189.9 768.1L187.9 764.5L186.0 760.5L184.3 756.1L182.7 751.4L181.3 746.4L180.0 741.1L179.0 735.5L178.1 729.7L177.4 723.7L177.0 717.6L176.7 711.3L176.7 705.0L176.9 698.7L177.3 692.3L177.9 686.0L178.7 679.9L179.7 673.8L180.9 667.9L182.3 662.3L183.9 656.9L185.6 651.8L187.4 647.0L189.4 642.5L191.6 638.4L193.8 634.7L196.1 631.3L198.5 628.4L200.9 625.9L203.4 623.8L205.9 622.1L208.4 620.9L210.9 620.0L213.4 619.6M209.9 782.1L208.4 781.4L206.9 780.4L205.4 778.9L204.0 777.0L202.5 774.7L201.2 771.9L199.9 768.7L198.6 765.2L197.5 761.2L196.4 756.9L195.4 752.2L194.5 747.2L193.8 741.8L193.1 736.3L192.6 730.4L192.1 724.4L191.9 718.2L191.7 711.9L191.7 705.5L191.8 699.1L192.0 692.7L192.4 686.4L192.9 680.1L193.6 674.0L194.3 668.1L195.2 662.4L196.1 657.0L197.2 651.8L198.4 647.0L199.6 642.5L200.9 638.4L202.3 634.6L203.7 631.3L205.2 628.3L206.7 625.8L208.2 623.7L209.8 622.1L211.3 620.8L212.8 620.0L214.4 619.6M213.9 782.2L213.4 781.6L212.9 780.6L212.4 779.1L211.9 777.3L211.4 775.0L210.9 772.2L210.5 769.1L210.1 765.5L209.7 761.6L209.3 757.3L209.0 752.6L208.7 747.6L208.4 742.2L208.2 736.6L208.0 730.8L207.9 724.7L207.8 718.5L207.7 712.2L207.7 705.8L207.7 699.4L207.8 692.9L208.0 686.6L208.1 680.3L208.3 674.2L208.6 668.2L208.9 662.5L209.2 657.0L209.6 651.8L210.0 647.0L210.4 642.5L210.8 638.3L211.3 634.6L211.8 631.2L212.3 628.3L212.8 625.8L213.3 623.7L213.8 622.0L214.4 620.8L214.9 620.0L215.4 619.6M217.9 782.2L218.4 781.6L218.9 780.6L219.4 779.1L219.9 777.3L220.4 775.0L220.9 772.2L221.3 769.1L221.7 765.5L222.1 761.6L222.5 757.3L222.8 752.6L223.1 747.6L223.4 742.2L223.6 736.6L223.8 730.8L223.9 724.7L224.0 718.5L224.1 712.2L224.1 705.8L224.1 699.4L224.0 692.9L223.8 686.6L223.7 680.3L223.5 674.2L223.2 668.2L222.9 662.5L222.6 657.0L222.2 651.8L221.8 647.0L221.4 642.5L221.0 638.3L220.5 634.6L220.0 631.2L219.5 628.3L219.0 625.8L218.5 623.7L218.0 622.0L217.4 620.8L216.9 620.0L216.4 619.6M221.9 782.1L223.4 781.4L224.9 780.4L226.4 778.9L227.8 777.0L229.3 774.7L230.6 771.9L231.9 768.7L233.2 765.2L234.3 761.2L235.4 756.9L236.4 752.2L237.3 747.2L238.0 741.8L238.7 736.3L239.2 730.4L239.7 724.4L239.9 718.2L240.1 711.9L240.1 705.5L240.0 699.1L239.8 692.7L239.4 686.4L238.9 680.1L238.2 674.0L237.5 668.1L236.6 662.4L235.7 657.0L234.6 651.8L233.4 647.0L232.2 642.5L230.9 638.4L229.5 634.6L228.1 631.3L226.6 628.3L225.1 625.8L223.6 623.7L222.0 622.1L220.5 620.8L219.0 620.0L217.4 619.6M225.7 781.8L228.2 781.1L230.6 780.0L233.0 778.4L235.3 776.4L237.6 774.1L239.8 771.3L241.9 768.1L243.9 764.5L245.8 760.5L247.5 756.1L249.1 751.4L250.5 746.4L251.8 741.1L252.8 735.5L253.7 729.7L254.4 723.7L254.8 717.6L255.1 711.3L255.1 705.0L254.9 698.7L254.5 692.3L253.9 686.0L253.1 679.9L252.1 673.8L250.9 667.9L249.5 662.3L247.9 656.9L246.2 651.8L244.4 647.0L242.4 642.5L240.2 638.4L238.0 634.7L235.7 631.3L233.3 628.4L230.9 625.9L228.4 623.8L225.9 622.1L223.4 620.9L220.9 620.0L218.4 619.6M229.2 781.4L232.5 780.6L235.7 779.3L239.0 777.7L242.1 775.7L245.2 773.2L248.1 770.3L250.9 767.1L253.6 763.4L256.1 759.4L258.4 755.0L260.5 750.3L262.4 745.3L264.1 740.0L265.5 734.5L266.6 728.7L267.5 722.8L268.1 716.7L268.4 710.5L268.5 704.3L268.2 698.0L267.7 691.8L266.9 685.6L265.8 679.5L264.5 673.5L262.9 667.7L261.0 662.1L259.0 656.8L256.7 651.7L254.2 646.9L251.5 642.5L248.7 638.4L245.7 634.7L242.6 631.4L239.4 628.5L236.2 626.0L232.8 623.9L229.4 622.2L226.0 620.9L222.6 620.1L219.3 619.7M236.2 779.9L240.2 778.5L244.1 776.8L248.0 774.6L251.7 772.1L255.2 769.1L258.6 765.8L261.8 762.1L264.9 758.0L267.6 753.7L270.2 748.9L272.4 743.9L274.4 738.7L276.1 733.2L277.5 727.5L278.6 721.6L279.3 715.6L279.7 709.5L279.7 703.4L279.4 697.2L278.8 691.0L277.9 684.9L276.6 678.9L275.0 673.1L273.0 667.4L270.8 661.9L268.3 656.6L265.6 651.6L262.6 646.9L259.3 642.5L255.9 638.5L252.3 634.8L248.6 631.5L244.7 628.6L240.7 626.1L236.7 624.0L232.5 622.3L228.4 621.0L224.2 620.1L220.0 619.7M243.9 777.6L248.3 775.7L252.7 773.5L256.9 770.8L261.0 767.8L264.8 764.3L268.4 760.6L271.8 756.5L275.0 752.1L277.8 747.4L280.4 742.4L282.6 737.1L284.5 731.7L286.0 726.1L287.2 720.3L288.0 714.4L288.5 708.4L288.5 702.3L288.2 696.3L287.5 690.2L286.4 684.2L285.0 678.4L283.2 672.6L281.0 667.0L278.5 661.6L275.7 656.4L272.6 651.5L269.3 646.9L265.6 642.6L261.7 638.6L257.7 634.9L253.4 631.6L249.0 628.7L244.5 626.2L239.8 624.1L235.1 622.4L230.3 621.1L225.5 620.2L220.7 619.7M256.2 772.2L260.8 769.4L265.1 766.2L269.3 762.7L273.2 758.9L276.8 754.8L280.2 750.3L283.2 745.6L286.0 740.6L288.3 735.4L290.4 730.1L292.0 724.5L293.3 718.8L294.1 713.0L294.6 707.1L294.7 701.2L294.3 695.2L293.6 689.3L292.4 683.5L290.9 677.7L289.0 672.1L286.7 666.6L284.0 661.3L281.0 656.2L277.7 651.4L274.1 646.8L270.2 642.6L266.0 638.6L261.6 635.0L257.0 631.8L252.2 628.9L247.2 626.4L242.2 624.2L237.0 622.5L231.8 621.2L226.5 620.3M276.0 757.1L279.8 753.0L283.2 748.5L286.4 743.8L289.2 738.8L291.6 733.7L293.7 728.3L295.4 722.9L296.6 717.3L297.5 711.6L298.0 705.8L298.1 700.0L297.7 694.2L297.0 688.4L295.8 682.7L294.2 677.0L292.2 671.5L289.9 666.2L287.2 661.0L284.1 656.0L280.7 651.3L276.9 646.8L272.9 642.6L268.6 638.7L264.0 635.1L259.2 631.9L254.2 629.0L249.0 626.5L243.7 624.4L238.3 622.6L232.7 621.3" fill="none" stroke="#a8e0e0" stroke-opacity=".36" stroke-width="1"/>
</g>
<ellipse cx="215.9" cy="701" rx="82.6" ry="81.0306" fill="none" stroke="#e0e0e0" stroke-width="1" stroke-dasharray="1.6 2.6" opacity=".75"/>
<ellipse cx="215.9" cy="701" rx="84.4" ry="82.7964" fill="none" stroke="#2c4444" stroke-width="1" opacity=".35"/>
<path d="M215.4 617 V664" stroke="#00c000" stroke-width="1" opacity=".28"/>
</svg>
<div class="abs" style="left:372.00px;top:295.00px;width:1.00px;height:753.00px;background:#a8a9ab;"></div>
<div class="abs" style="left:378.00px;top:301.00px;width:1510.00px;height:707.00px;background:#eff0f1;"></div>
<div class="abs" style="left:626.00px;top:302.00px;width:1013.00px;height:706.00px;background:#000;"></div>
<div class="abs" style="left:1910.00px;top:308.00px;width:6.00px;height:693.00px;background:#d7d8d9;border-radius:3px;border:1px solid #c0c1c3"></div>
<div class="abs" style="left:1910.00px;top:308.00px;width:6.00px;height:480.00px;background:#c0e0f1;border-radius:3px;border:1px solid #96cde9"></div>
<div class="abs" style="left:1917.30px;top:328.00px;width:9.00px;height:1.00px;background:#b2b3b5;"></div>
<div class="abs" style="left:1917.30px;top:347.30px;width:9.00px;height:1.00px;background:#b2b3b5;"></div>
<div class="abs" style="left:1917.30px;top:366.60px;width:9.00px;height:1.00px;background:#b2b3b5;"></div>
<div class="abs" style="left:1917.30px;top:385.90px;width:9.00px;height:1.00px;background:#b2b3b5;"></div>
<div class="abs" style="left:1917.30px;top:405.20px;width:9.00px;height:1.00px;background:#b2b3b5;"></div>
<div class="abs" style="left:1917.30px;top:424.50px;width:9.00px;height:1.00px;background:#b2b3b5;"></div>
<div class="abs" style="left:1917.30px;top:443.80px;width:9.00px;height:1.00px;background:#b2b3b5;"></div>
<div class="abs" style="left:1917.30px;top:463.10px;width:9.00px;height:1.00px;background:#b2b3b5;"></div>
<div class="abs" style="left:1917.30px;top:482.40px;width:9.00px;height:1.00px;background:#b2b3b5;"></div>
<div class="abs" style="left:1917.30px;top:501.70px;width:9.00px;height:1.00px;background:#b2b3b5;"></div>
<div class="abs" style="left:1917.30px;top:521.00px;width:9.00px;height:1.00px;background:#b2b3b5;"></div>
<div class="abs" style="left:1917.30px;top:540.30px;width:9.00px;height:1.00px;background:#b2b3b5;"></div>
<div class="abs" style="left:1917.30px;top:559.60px;width:9.00px;height:1.00px;background:#b2b3b5;"></div>
<div class="abs" style="left:1917.30px;top:578.90px;width:9.00px;height:1.00px;background:#b2b3b5;"></div>
<div class="abs" style="left:1917.30px;top:598.20px;width:9.00px;height:1.00px;background:#b2b3b5;"></div>
<div class="abs" style="left:1917.30px;top:617.50px;width:9.00px;height:1.00px;background:#b2b3b5;"></div>
<div class="abs" style="left:1917.30px;top:636.80px;width:9.00px;height:1.00px;background:#b2b3b5;"></div>
<div class="abs" style="left:1917.30px;top:656.10px;width:9.00px;height:1.00px;background:#b2b3b5;"></div>
<div class="abs" style="left:1917.30px;top:675.40px;width:9.00px;height:1.00px;background:#b2b3b5;"></div>
<div class="abs" style="left:1917.30px;top:694.70px;width:9.00px;height:1.00px;background:#b2b3b5;"></div>
<div class="abs" style="left:1917.30px;top:714.00px;width:9.00px;height:1.00px;background:#b2b3b5;"></div>
<div class="abs" style="left:1917.30px;top:733.30px;width:9.00px;height:1.00px;background:#b2b3b5;"></div>
<div class="abs" style="left:1917.30px;top:752.60px;width:9.00px;height:1.00px;background:#b2b3b5;"></div>
<div class="abs" style="left:1917.30px;top:771.90px;width:9.00px;height:1.00px;background:#b2b3b5;"></div>
<div class="abs" style="left:1917.30px;top:791.20px;width:9.00px;height:1.00px;background:#b2b3b5;"></div>
<div class="abs" style="left:1917.30px;top:810.50px;width:9.00px;height:1.00px;background:#b2b3b5;"></div>
<div class="abs" style="left:1917.30px;top:829.80px;width:9.00px;height:1.00px;background:#b2b3b5;"></div>
<div class="abs" style="left:1917.30px;top:849.10px;width:9.00px;height:1.00px;background:#b2b3b5;"></div>
<div class="abs" style="left:1917.30px;top:868.40px;width:9.00px;height:1.00px;background:#b2b3b5;"></div>
<div class="abs" style="left:1917.30px;top:887.70px;width:9.00px;height:1.00px;background:#b2b3b5;"></div>
<div class="abs" style="left:1917.30px;top:907.00px;width:9.00px;height:1.00px;background:#b2b3b5;"></div>
<div class="abs" style="left:1917.30px;top:926.30px;width:9.00px;height:1.00px;background:#b2b3b5;"></div>
<div class="abs" style="left:1917.30px;top:945.60px;width:9.00px;height:1.00px;background:#b2b3b5;"></div>
<div class="abs" style="left:1917.30px;top:964.90px;width:9.00px;height:1.00px;background:#b2b3b5;"></div>
<div class="abs" style="left:1917.30px;top:984.20px;width:9.00px;height:1.00px;background:#b2b3b5;"></div>
<div class="abs" style="left:1904.00px;top:777.60px;width:18.00px;height:18.00px;background:#f0f1f2;border-radius:50%;border:1px solid #8f9092"></div>
<div class="abs" style="left:385.00px;top:1030.00px;width:1496.00px;height:6.00px;background:#d7d8d9;border-radius:3px;border:1px solid #c0c1c3"></div>
<div class="abs" style="left:385.00px;top:1030.00px;width:742.00px;height:6.00px;background:#c0e0f1;border-radius:3px;border:1px solid #96cde9"></div>
<div class="abs" style="left:406.00px;top:1037.20px;width:1.00px;height:8.60px;background:#b2b3b5;"></div>
<div class="abs" style="left:426.81px;top:1037.20px;width:1.00px;height:8.60px;background:#b2b3b5;"></div>
<div class="abs" style="left:447.62px;top:1037.20px;width:1.00px;height:8.60px;background:#b2b3b5;"></div>
<div class="abs" style="left:468.43px;top:1037.20px;width:1.00px;height:8.60px;background:#b2b3b5;"></div>
<div class="abs" style="left:489.24px;top:1037.20px;width:1.00px;height:8.60px;background:#b2b3b5;"></div>
<div class="abs" style="left:510.05px;top:1037.20px;width:1.00px;height:8.60px;background:#b2b3b5;"></div>
<div class="abs" style="left:530.86px;top:1037.20px;width:1.00px;height:8.60px;background:#b2b3b5;"></div>
<div class="abs" style="left:551.67px;top:1037.20px;width:1.00px;height:8.60px;background:#b2b3b5;"></div>
<div class="abs" style="left:572.48px;top:1037.20px;width:1.00px;height:8.60px;background:#b2b3b5;"></div>
<div class="abs" style="left:593.29px;top:1037.20px;width:1.00px;height:8.60px;background:#b2b3b5;"></div>
<div class="abs" style="left:614.10px;top:1037.20px;width:1.00px;height:8.60px;background:#b2b3b5;"></div>
<div class="abs" style="left:634.91px;top:1037.20px;width:1.00px;height:8.60px;background:#b2b3b5;"></div>
<div class="abs" style="left:655.72px;top:1037.20px;width:1.00px;height:8.60px;background:#b2b3b5;"></div>
<div class="abs" style="left:676.53px;top:1037.20px;width:1.00px;height:8.60px;background:#b2b3b5;"></div>
<div class="abs" style="left:697.34px;top:1037.20px;width:1.00px;height:8.60px;background:#b2b3b5;"></div>
<div class="abs" style="left:718.15px;top:1037.20px;width:1.00px;height:8.60px;background:#b2b3b5;"></div>
<div class="abs" style="left:738.96px;top:1037.20px;width:1.00px;height:8.60px;background:#b2b3b5;"></div>
<div class="abs" style="left:759.77px;top:1037.20px;width:1.00px;height:8.60px;background:#b2b3b5;"></div>
<div class="abs" style="left:780.58px;top:1037.20px;width:1.00px;height:8.60px;background:#b2b3b5;"></div>
<div class="abs" style="left:801.39px;top:1037.20px;width:1.00px;height:8.60px;background:#b2b3b5;"></div>
<div class="abs" style="left:822.20px;top:1037.20px;width:1.00px;height:8.60px;background:#b2b3b5;"></div>
<div class="abs" style="left:843.01px;top:1037.20px;width:1.00px;height:8.60px;background:#b2b3b5;"></div>
<div class="abs" style="left:863.82px;top:1037.20px;width:1.00px;height:8.60px;background:#b2b3b5;"></div>
<div class="abs" style="left:884.63px;top:1037.20px;width:1.00px;height:8.60px;background:#b2b3b5;"></div>
<div class="abs" style="left:905.44px;top:1037.20px;width:1.00px;height:8.60px;background:#b2b3b5;"></div>
<div class="abs" style="left:926.25px;top:1037.20px;width:1.00px;height:8.60px;background:#b2b3b5;"></div>
<div class="abs" style="left:947.06px;top:1037.20px;width:1.00px;height:8.60px;background:#b2b3b5;"></div>
<div class="abs" style="left:967.87px;top:1037.20px;width:1.00px;height:8.60px;background:#b2b3b5;"></div>
<div class="abs" style="left:988.68px;top:1037.20px;width:1.00px;height:8.60px;background:#b2b3b5;"></div>
<div class="abs" style="left:1009.49px;top:1037.20px;width:1.00px;height:8.60px;background:#b2b3b5;"></div>
<div class="abs" style="left:1030.30px;top:1037.20px;width:1.00px;height:8.60px;background:#b2b3b5;"></div>
<div class="abs" style="left:1051.11px;top:1037.20px;width:1.00px;height:8.60px;background:#b2b3b5;"></div>
<div class="abs" style="left:1071.92px;top:1037.20px;width:1.00px;height:8.60px;background:#b2b3b5;"></div>
<div class="abs" style="left:1092.73px;top:1037.20px;width:1.00px;height:8.60px;background:#b2b3b5;"></div>
<div class="abs" style="left:1113.54px;top:1037.20px;width:1.00px;height:8.60px;background:#b2b3b5;"></div>
<div class="abs" style="left:1134.35px;top:1037.20px;width:1.00px;height:8.60px;background:#b2b3b5;"></div>
<div class="abs" style="left:1155.16px;top:1037.20px;width:1.00px;height:8.60px;background:#b2b3b5;"></div>
<div class="abs" style="left:1175.97px;top:1037.20px;width:1.00px;height:8.60px;background:#b2b3b5;"></div>
<div class="abs" style="left:1196.78px;top:1037.20px;width:1.00px;height:8.60px;background:#b2b3b5;"></div>
<div class="abs" style="left:1217.59px;top:1037.20px;width:1.00px;height:8.60px;background:#b2b3b5;"></div>
<div class="abs" style="left:1238.40px;top:1037.20px;width:1.00px;height:8.60px;background:#b2b3b5;"></div>
<div class="abs" style="left:1259.21px;top:1037.20px;width:1.00px;height:8.60px;background:#b2b3b5;"></div>
<div class="abs" style="left:1280.02px;top:1037.20px;width:1.00px;height:8.60px;background:#b2b3b5;"></div>
<div class="abs" style="left:1300.83px;top:1037.20px;width:1.00px;height:8.60px;background:#b2b3b5;"></div>
<div class="abs" style="left:1321.64px;top:1037.20px;width:1.00px;height:8.60px;background:#b2b3b5;"></div>
<div class="abs" style="left:1342.45px;top:1037.20px;width:1.00px;height:8.60px;background:#b2b3b5;"></div>
<div class="abs" style="left:1363.26px;top:1037.20px;width:1.00px;height:8.60px;background:#b2b3b5;"></div>
<div class="abs" style="left:1384.07px;top:1037.20px;width:1.00px;height:8.60px;background:#b2b3b5;"></div>
<div class="abs" style="left:1404.88px;top:1037.20px;width:1.00px;height:8.60px;background:#b2b3b5;"></div>
<div class="abs" style="left:1425.69px;top:1037.20px;width:1.00px;height:8.60px;background:#b2b3b5;"></div>
<div class="abs" style="left:1446.50px;top:1037.20px;width:1.00px;height:8.60px;background:#b2b3b5;"></div>
<div class="abs" style="left:1467.31px;top:1037.20px;width:1.00px;height:8.60px;background:#b2b3b5;"></div>
<div class="abs" style="left:1488.12px;top:1037.20px;width:1.00px;height:8.60px;background:#b2b3b5;"></div>
<div class="abs" style="left:1508.93px;top:1037.20px;width:1.00px;height:8.60px;background:#b2b3b5;"></div>
<div class="abs" style="left:1529.74px;top:1037.20px;width:1.00px;height:8.60px;background:#b2b3b5;"></div>
<div class="abs" style="left:1550.55px;top:1037.20px;width:1.00px;height:8.60px;background:#b2b3b5;"></div>
<div class="abs" style="left:1571.36px;top:1037.20px;width:1.00px;height:8.60px;background:#b2b3b5;"></div>
<div class="abs" style="left:1592.17px;top:1037.20px;width:1.00px;height:8.60px;background:#b2b3b5;"></div>
<div class="abs" style="left:1612.98px;top:1037.20px;width:1.00px;height:8.60px;background:#b2b3b5;"></div>
<div class="abs" style="left:1633.79px;top:1037.20px;width:1.00px;height:8.60px;background:#b2b3b5;"></div>
<div class="abs" style="left:1654.60px;top:1037.20px;width:1.00px;height:8.60px;background:#b2b3b5;"></div>
<div class="abs" style="left:1675.41px;top:1037.20px;width:1.00px;height:8.60px;background:#b2b3b5;"></div>
<div class="abs" style="left:1696.22px;top:1037.20px;width:1.00px;height:8.60px;background:#b2b3b5;"></div>
<div class="abs" style="left:1717.03px;top:1037.20px;width:1.00px;height:8.60px;background:#b2b3b5;"></div>
<div class="abs" style="left:1737.84px;top:1037.20px;width:1.00px;height:8.60px;background:#b2b3b5;"></div>
<div class="abs" style="left:1758.65px;top:1037.20px;width:1.00px;height:8.60px;background:#b2b3b5;"></div>
<div class="abs" style="left:1779.46px;top:1037.20px;width:1.00px;height:8.60px;background:#b2b3b5;"></div>
<div class="abs" style="left:1800.27px;top:1037.20px;width:1.00px;height:8.60px;background:#b2b3b5;"></div>
<div class="abs" style="left:1821.08px;top:1037.20px;width:1.00px;height:8.60px;background:#b2b3b5;"></div>
<div class="abs" style="left:1841.89px;top:1037.20px;width:1.00px;height:8.60px;background:#b2b3b5;"></div>
<div class="abs" style="left:1862.70px;top:1037.20px;width:1.00px;height:8.60px;background:#b2b3b5;"></div>
<div class="abs" style="left:1117.10px;top:1023.90px;width:18.00px;height:18.00px;background:#f0f1f2;border-radius:50%;border:1px solid #8f9092"></div>
<svg style="left:626px;top:302px" width="1013" height="706" viewBox="626 302 1013 706">
<defs>
<clipPath id="pc"><rect width="100" height="66"/></clipPath>
<clipPath id="vc"><rect x="626" y="302" width="1013" height="706"/></clipPath>
<radialGradient id="sun"><stop offset="0" stop-color="#fff"/><stop offset=".35" stop-color="#fff" stop-opacity=".85"/><stop offset="1" stop-color="#fff" stop-opacity="0"/></radialGradient>
<filter id="fol" x="-5%" y="-5%" width="110%" height="110%" color-interpolation-filters="sRGB">
<feTurbulence type="fractalNoise" baseFrequency="0.2" numOctaves="2" seed="7" result="n"/>
<feDisplacementMap in="SourceGraphic" in2="n" scale="10" xChannelSelector="R" yChannelSelector="G" result="d0"/>
<feGaussianBlur in="d0" stdDeviation="0.7" result="d1"/>
<feTurbulence type="fractalNoise" baseFrequency="0.3" numOctaves="3" seed="21" result="n3"/>
<feColorMatrix in="n3" type="matrix" values="0 0 0 0 1  0 0 0 0 1  0 0 0 0 1  0 0 4.2 0 -1.05" result="mask"/>
<feComposite in="d1" in2="mask" operator="in" result="d"/>
<feTurbulence type="fractalNoise" baseFrequency="0.55" numOctaves="2" seed="11" result="n2"/>
<feColorMatrix in="n2" type="matrix" values="0 0 0 0 0.8  0 0 0 0 0.86  0 0 0 0 0.8  1.5 0 0 0 -0.68" result="hl"/>
<feComposite in="hl" in2="d" operator="in" result="hl2"/>
<feColorMatrix in="n2" type="matrix" values="0 0 0 0 0.1  0 0 0 0 0.16  0 0 0 0 0.1  0 1.8 0 0 -0.74" result="sh"/>
<feComposite in="sh" in2="d" operator="in" result="sh2"/>
<feMerge result="m"><feMergeNode in="d"/><feMergeNode in="sh2"/><feMergeNode in="hl2"/></feMerge>
<feGaussianBlur in="m" stdDeviation="0.45"/>
</filter>
<filter id="fol2" x="-5%" y="-5%" width="110%" height="110%" color-interpolation-filters="sRGB">
<feTurbulence type="fractalNoise" baseFrequency="0.2" numOctaves="2" seed="5" result="n"/>
<feDisplacementMap in="SourceGraphic" in2="n" scale="10" xChannelSelector="R" yChannelSelector="G" result="d0"/>
<feGaussianBlur in="d0" stdDeviation="0.9" result="d"/>
<feTurbulence type="fractalNoise" baseFrequency="0.5" numOctaves="2" seed="13" result="n2"/>
<feColorMatrix in="n2" type="matrix" values="0 0 0 0 0.72  0 0 0 0 0.76  0 0 0 0 0.66  1.1 0 0 0 -0.5" result="hl"/>
<feComposite in="hl" in2="d" operator="in" result="hl2"/>
<feColorMatrix in="n2" type="matrix" values="0 0 0 0 0.08  0 0 0 0 0.12  0 0 0 0 0.08  0 1.5 0 0 -0.6" result="sh"/>
<feComposite in="sh" in2="d" operator="in" result="sh2"/>
<feMerge result="m"><feMergeNode in="d"/><feMergeNode in="sh2"/><feMergeNode in="hl2"/></feMerge>
<feGaussianBlur in="m" stdDeviation="0.5"/>
</filter>
<filter id="soft" x="-20%" y="-20%" width="140%" height="140%">
<feTurbulence type="fractalNoise" baseFrequency="0.15" numOctaves="2" seed="3" result="n"/>
<feDisplacementMap in="SourceGraphic" in2="n" scale="8" xChannelSelector="R" yChannelSelector="G" result="d0"/>
<feGaussianBlur in="d0" stdDeviation="1.3"/>
</filter>
<filter id="tb" x="-10%" y="-10%" width="120%" height="120%"><feGaussianBlur stdDeviation="0.55"/></filter>
<linearGradient id="gsky2" x1="0" y1="0" x2="1" y2=".4"><stop offset="0" stop-color="#cfe0f4"/><stop offset="1" stop-color="#a6c2ea"/></linearGradient>
<linearGradient id="gsky" x1="0" y1="0" x2="0" y2="1"><stop offset="0" stop-color="#a4c0e8"/><stop offset="1" stop-color="#c8dcec"/></linearGradient>
<linearGradient id="gA" x1="0.7" y1="0" x2="0.25" y2="1"><stop offset="0" stop-color="#a4c4ec"/><stop offset="0.45" stop-color="#cfe2f6"/><stop offset="0.8" stop-color="#f6fbfd"/><stop offset="1" stop-color="#ffffff"/></linearGradient>
<linearGradient id="gB" x1="0" y1="0" x2="1" y2="0.3"><stop offset="0" stop-color="#c6dcf4"/><stop offset="0.5" stop-color="#b4d0f0"/><stop offset="1" stop-color="#9fbee8"/></linearGradient>
<linearGradient id="gC" x1="0.5" y1="0" x2="0.1" y2="1"><stop offset="0" stop-color="#b2cef0"/><stop offset="0.35" stop-color="#d4e4f6"/><stop offset="0.65" stop-color="#fbfdfe"/><stop offset="1" stop-color="#ffffff"/></linearGradient>
<linearGradient id="gD1" x1="0" y1="0" x2="0" y2="1"><stop offset="0" stop-color="#aebcb2"/><stop offset="0.75" stop-color="#b8c4ba"/><stop offset="0.86" stop-color="#e6ecea"/><stop offset="1" stop-color="#f4f8f6"/></linearGradient>
<linearGradient id="gD2" x1="0" y1="0" x2="0" y2="1"><stop offset="0" stop-color="#b0beb4"/><stop offset="0.7" stop-color="#bcc8be"/><stop offset="1" stop-color="#d4dcd6"/></linearGradient>
<linearGradient id="gE" x1="0" y1="0.3" x2="1" y2="0"><stop offset="0" stop-color="#d4e2f2"/><stop offset="0.4" stop-color="#b4cdee"/><stop offset="1" stop-color="#9dbae6"/></linearGradient>
<linearGradient id="gF" x1="0" y1="0.6" x2="1" y2="0"><stop offset="0" stop-color="#d2e2f4"/><stop offset="0.45" stop-color="#b2ccee"/><stop offset="1" stop-color="#9ab8e4"/></linearGradient>
<linearGradient id="gG" x1="0" y1="0" x2="1" y2="0"><stop offset="0" stop-color="#7e8e7c"/><stop offset="1" stop-color="#607a58"/></linearGradient>
<linearGradient id="gH" x1="0" y1="0" x2="0" y2="1"><stop offset="0" stop-color="#f8fafb"/><stop offset="0.4" stop-color="#f2f6f7"/><stop offset="0.5" stop-color="#748444"/><stop offset="1" stop-color="#6a7a44"/></linearGradient>
<linearGradient id="gI" x1="0" y1="0" x2="0" y2="1"><stop offset="0" stop-color="#ffffff"/><stop offset="0.3" stop-color="#f4f6f5"/><stop offset="0.4" stop-color="#76845a"/><stop offset="1" stop-color="#74805a"/></linearGradient>
<linearGradient id="gJ" x1="0" y1="0" x2="0" y2="1"><stop offset="0" stop-color="#a4aea6"/><stop offset="0.28" stop-color="#88947e"/><stop offset="0.6" stop-color="#566640"/><stop offset="1" stop-color="#3e4a30"/></linearGradient>
<linearGradient id="gK" x1="0" y1="0" x2="0" y2="1"><stop offset="0" stop-color="#a2aca4"/><stop offset="0.4" stop-color="#84907c"/><stop offset="0.7" stop-color="#586640"/><stop offset="1" stop-color="#3a4430"/></linearGradient>
<linearGradient id="gL" x1="0" y1="0" x2="0" y2="1"><stop offset="0" stop-color="#a6b0a8"/><stop offset="0.3" stop-color="#7e8a74"/><stop offset="0.6" stop-color="#4c5838"/><stop offset="1" stop-color="#383e2e"/></linearGradient>
<linearGradient id="gO" x1="0" y1="0" x2="0" y2="1"><stop offset="0" stop-color="#a2aca4"/><stop offset="0.3" stop-color="#7a8670"/><stop offset="0.6" stop-color="#50523e"/><stop offset="1" stop-color="#38382e"/></linearGradient>
<linearGradient id="gM" x1="0" y1="0" x2="0" y2="1"><stop offset="0" stop-color="#55684f"/><stop offset="0.55" stop-color="#50684a"/><stop offset="0.8" stop-color="#7a7458"/><stop offset="1" stop-color="#58683e"/></linearGradient>
<linearGradient id="gN" x1="0" y1="0" x2="0" y2="1"><stop offset="0" stop-color="#404c3c"/><stop offset="0.45" stop-color="#465038"/><stop offset="0.65" stop-color="#605a3e"/><stop offset="1" stop-color="#32322a"/></linearGradient>
<linearGradient id="gP" x1="0" y1="0" x2="0" y2="1"><stop offset="0" stop-color="#5c6440"/><stop offset="0.4" stop-color="#5e563a"/><stop offset="1" stop-color="#4e402c"/></linearGradient>
<linearGradient id="gQ" x1="0" y1="0" x2="0" y2="1"><stop offset="0" stop-color="#283222"/><stop offset="1" stop-color="#32302a"/></linearGradient>
<linearGradient id="gR" x1="0" y1="0" x2="0" y2="1"><stop offset="0" stop-color="#3a4e2c"/><stop offset="0.5" stop-color="#2c3c26"/><stop offset="1" stop-color="#46464a"/></linearGradient>
</defs>
<g clip-path="url(#vc)">
<path d="M893.55 432.45 Q 995 407.9 1105.45 419.8" stroke="#ff0000" stroke-width="4.3" fill="none"/>
<path d="M1066 432 Q 990 445 936.5 499.5" stroke="#c4c4c4" stroke-width="1" fill="none"/>
<path d="M893.5 432.2 L897.8 528.0" stroke="#ff0000" stroke-width="3.2"/>
<path d="M893.5 432.2 L1014.4 525.2" stroke="#ff0000" stroke-width="3"/>
<path d="M893.5 432.2 L1025.8 523.0" stroke="#ff0000" stroke-width="3"/>
<path d="M1105.5 419.7 L1014.4 525.2" stroke="#ff0000" stroke-width="2.2"/>
<path d="M1105.5 419.7 L1025.8 523.0" stroke="#ff0000" stroke-width="2.2"/>
<path d="M897.8 528.0 L1014.4 525.2" stroke="#ff0000" stroke-width="5"/>
<path d="M1025.8 523.0 L1289.0 450.3" stroke="#ff0000" stroke-width="2.6"/>
<path d="M1025.8 523.0 L1257.7 541.4" stroke="#ff0000" stroke-width="4"/>
<path d="M1105.5 419.7 L1289.0 450.3" stroke="#ff0000" stroke-width="2"/>
<path d="M1105.5 419.7 L1257.7 541.4" stroke="#ff0000" stroke-width="2"/>
<path d="M897.8 528.0 L899.1 679.9" stroke="#ff0000" stroke-width="4.3"/>
<path d="M897.8 528.0 L910.6 644.1" stroke="#ff0000" stroke-width="2.6"/>
<path d="M897.8 528.0 L1019.7 700.9" stroke="#ff0000" stroke-width="3"/>
<path d="M897.8 528.0 L1108.9 657.0" stroke="#ff0000" stroke-width="2.6"/>
<path d="M1014.4 525.2 L910.6 644.1" stroke="#ff0000" stroke-width="6"/>
<path d="M1025.8 523.0 L910.6 644.1" stroke="#ff0000" stroke-width="5.5"/>
<path d="M1014.4 525.2 L899.1 679.9" stroke="#ff0000" stroke-width="4"/>
<path d="M1014.4 525.2 L1019.7 700.9" stroke="#ff0000" stroke-width="5"/>
<path d="M1025.8 523.0 L1019.7 700.9" stroke="#ff0000" stroke-width="4.5"/>
<path d="M1014.4 525.2 L1108.9 657.0" stroke="#ff0000" stroke-width="3"/>
<path d="M1025.8 523.0 L1108.9 657.0" stroke="#ff0000" stroke-width="3.5"/>
<path d="M910.6 644.1 L1108.9 657.0" stroke="#ff0000" stroke-width="2"/>
<path d="M899.1 679.9 L1108.9 657.0" stroke="#ff0000" stroke-width="5"/>
<path d="M910.6 644.1 L1019.7 700.9" stroke="#ff0000" stroke-width="2.5"/>
<path d="M899.1 679.9 L1019.7 700.9" stroke="#ff0000" stroke-width="6"/>
<path d="M899.1 679.9 L1189.2 700.0" stroke="#ff0000" stroke-width="2"/>
<path d="M1019.7 700.9 L1189.2 700.0" stroke="#ff0000" stroke-width="5"/>
<path d="M1257.7 541.4 L1108.9 657.0" stroke="#ff0000" stroke-width="2.2"/>
<path d="M1257.7 541.4 L1019.7 700.9" stroke="#ff0000" stroke-width="2.2"/>
<path d="M1257.7 541.4 L1189.2 700.0" stroke="#ff0000" stroke-width="2.2"/>
<path d="M1257.7 541.4 L1263.7 694.0" stroke="#ff0000" stroke-width="4.5"/>
<path d="M1289.0 450.3 L1263.7 694.0" stroke="#ff0000" stroke-width="2.6"/>
<path d="M1108.9 657.0 L1382.0 595.0" stroke="#ff0000" stroke-width="3"/>
<path d="M1108.9 657.0 L1379.6 685.4" stroke="#ff0000" stroke-width="3"/>
<path d="M1108.9 657.0 L1263.7 694.0" stroke="#ff0000" stroke-width="2.5"/>
<path d="M1257.7 541.4 L1379.6 685.4" stroke="#ff0000" stroke-width="3.6"/>
<path d="M1257.7 541.4 L1382.0 595.0" stroke="#ff0000" stroke-width="5"/>
<path d="M1189.2 700.0 L1382.0 595.0" stroke="#ff0000" stroke-width="3"/>
<path d="M1263.7 694.0 L1386.0 485.3" stroke="#ff0000" stroke-width="2.2"/>
<path d="M1263.7 694.0 L1382.0 595.0" stroke="#ff0000" stroke-width="3.6"/>
<path d="M1289.0 450.3 L1382.0 595.0" stroke="#ff0000" stroke-width="2.6"/>
<path d="M1386.0 485.3 L1257.7 541.4" stroke="#ff0000" stroke-width="3"/>
<path d="M1386.0 485.3 L1382.0 595.0" stroke="#ff0000" stroke-width="3.6"/>
<path d="M1382.0 595.0 L1379.6 685.4" stroke="#ff0000" stroke-width="3.6"/>
<path d="M1263.7 694.0 L1379.6 685.4" stroke="#ff0000" stroke-width="6"/>
<path d="M1379.6 685.4 L1374.8 777.5" stroke="#ff0000" stroke-width="3.6"/>
<path d="M1189.2 700.0 L1263.7 694.0" stroke="#ff0000" stroke-width="3"/>
<path d="M1289.0 450.3 L1386.0 485.3" stroke="#ff0000" stroke-width="4"/>
<path d="M1020.0 525.0 L1375.0 777.5" stroke="#c4c4c4" stroke-width="1"/>
<path d="M1026.0 524.0 L1378.0 780.0" stroke="#c4c4c4" stroke-width="1"/>
<path d="M1013.0 525.0 L1406.0 825.0" stroke="#c4c4c4" stroke-width="1"/>
<path d="M1025.0 524.0 L1404.0 822.0" stroke="#c4c4c4" stroke-width="1"/>
<path d="M1013.0 525.0 L1189.0 700.0" stroke="#c4c4c4" stroke-width="1"/>
<path d="M1025.0 524.0 L1192.0 698.0" stroke="#c4c4c4" stroke-width="1"/>
<path d="M1231.3 720.9 L1333.9 765.2" stroke="#c4c4c4" stroke-width="1.8"/>
<path d="M1217.4 728.7 L1355.7 837.4" stroke="#c4c4c4" stroke-width="1"/>
<path d="M1228.7 728.7 L1333.9 793.9" stroke="#c4c4c4" stroke-width="1"/>
<path d="M1342.6 804.3 L1365.2 830.4" stroke="#c4c4c4" stroke-width="1"/>
<path d="M910.0 644.0 L1189.0 700.0" stroke="#c4c4c4" stroke-width="1"/>
<path d="M1381.5 712.0 L1384.5 751.0" stroke="#c4c4c4" stroke-width="1"/>
<path d="M1384.5 712.0 L1392.5 751.0" stroke="#c4c4c4" stroke-width="1"/>
<path d="M1383.6 622.0 L1381.8 658.0" stroke="#f0f0f0" stroke-width="1"/>
<path d="M897.8 462.0 L903.5 556.0" stroke="#c4c4c4" stroke-width="1"/>
<path d="M903.0 556.0 L910.0 617.0" stroke="#c4c4c4" stroke-width="1"/>
<path d="M1146 420.5 L1250 434.5" stroke="#c4c4c4" stroke-width="1"/>
<path d="M1303.6 479.1 Q 1340 560 1370.4 658" stroke="#ff8c00" stroke-width="2" fill="none"/>
<path d="M1278.6 476 L1266 516" stroke="#ffffff" stroke-width="4.4"/>
<g transform="matrix(0.81800 0.00000 0.00000 0.81515 858.200 653.000)"><g clip-path="url(#pc)">
<rect width="100" height="66" fill="url(#gI)"/>
<g filter="url(#fol2)">
<ellipse cx="14" cy="34" rx="16" ry="10" fill="#52703c" opacity="1"/>
<ellipse cx="37" cy="46" rx="7" ry="22" fill="#3c5c30" opacity="1"/>
<ellipse cx="75" cy="44" rx="26" ry="14" fill="#687a4e" opacity="1"/>
<ellipse cx="16" cy="58" rx="18" ry="10" fill="#a4987c" opacity="1"/>
<ellipse cx="70" cy="60" rx="30" ry="8" fill="#5c7040" opacity="1"/>
</g>
<g filter="url(#soft)"><polygon points="38,20 88,20 88,27 40,27" fill="#eef2f0" opacity="0.9"/></g>
<path d="M52 28 Q75 32 100 44" stroke="#4e5650" stroke-width="4.2" opacity="0.63" fill="none" stroke-linecap="round" filter="url(#tb)" transform="translate(0.6 0.9)"/><path d="M52 28 Q75 32 100 44" stroke="#939b98" stroke-width="3.4" opacity="0.9" fill="none" stroke-linecap="round" filter="url(#tb)"/>
</g>
</g>
<g transform="matrix(0.80800 0.00000 0.00000 0.82121 870.200 617.000)"><g clip-path="url(#pc)">
<rect width="100" height="66" fill="url(#gH)"/>
<g filter="url(#fol2)">
<polygon points="28,0 100,0 100,18 70,16 40,8" fill="#7c8a80" opacity="1"/>
<ellipse cx="24" cy="32" rx="20" ry="16" fill="#4e6e34" opacity="1"/>
<ellipse cx="70" cy="48" rx="34" ry="18" fill="#6c7c44" opacity="1"/>
<ellipse cx="14" cy="60" rx="18" ry="9" fill="#8c7e5a" opacity="1"/>
<ellipse cx="90" cy="62" rx="14" ry="8" fill="#56743a" opacity="1"/>
<ellipse cx="46" cy="50" rx="10" ry="14" fill="#3e5e30" opacity="1"/>
</g>
<g filter="url(#soft)"><polygon points="52,17 100,18 100,26 60,24" fill="#dfeaee" opacity="0.9"/></g>
<path d="M40 6 Q62 16 80 30 T100 40" stroke="#4e5650" stroke-width="4.8" opacity="0.665" fill="none" stroke-linecap="round" filter="url(#tb)" transform="translate(0.6 0.9)"/><path d="M40 6 Q62 16 80 30 T100 40" stroke="#8e9896" stroke-width="4" opacity="0.95" fill="none" stroke-linecap="round" filter="url(#tb)"/>
<path d="M62 8 Q80 12 100 12" stroke="#8a9490" stroke-width="1.8" opacity="0.7" fill="none" stroke-linecap="round" filter="url(#tb)"/>
</g>
</g>
<g transform="matrix(0.80700 -0.06700 0.06061 0.82121 851.200 408.500)"><g clip-path="url(#pc)">
<rect width="100" height="66" fill="url(#gA)"/>
<g filter="url(#soft)"><ellipse cx="68" cy="44" rx="22" ry="14" fill="#5c7462" opacity="0.7"/></g>
<g filter="url(#fol)">
<ellipse cx="66" cy="43" rx="33" ry="22" fill="#6f8574" opacity="1"/>
<ellipse cx="86" cy="27" rx="13" ry="11" fill="#668269" opacity="1"/>
<ellipse cx="46" cy="56" rx="17" ry="11" fill="#779072" opacity="1"/>
<ellipse cx="54" cy="31" rx="12" ry="8" fill="#6a876e" opacity="1"/>
<ellipse cx="78" cy="50" rx="18" ry="14" fill="#667e6c" opacity="1"/>
<ellipse cx="36" cy="52" rx="13" ry="11" fill="#778f76" opacity="1"/>
</g>
<circle cx="70" cy="50" r="11" fill="url(#sun)"/>
<g filter="url(#soft)"><ellipse cx="80" cy="56" rx="6" ry="4" fill="#3aa080" opacity="0.35"/></g>
</g>
</g>
<g transform="matrix(0.80900 0.00400 0.00000 0.82121 1065.000 392.400)"><g clip-path="url(#pc)">
<rect width="100" height="66" fill="url(#gB)"/>
<g filter="url(#fol)">
<ellipse cx="18" cy="36" rx="22" ry="24" fill="#6f8374" opacity="1"/>
<ellipse cx="80" cy="50" rx="26" ry="20" fill="#65845e" opacity="1"/>
<polygon points="0,42 100,46 100,66 0,66" fill="#718376" opacity="1"/>
<ellipse cx="42" cy="46" rx="14" ry="16" fill="#768878" opacity="1"/>
<ellipse cx="96" cy="36" rx="8" ry="10" fill="#608058" opacity="1"/>
</g>
<g filter="url(#soft)"><ellipse cx="60" cy="36" rx="9" ry="7" fill="#eef6fa" opacity="0.95"/></g>
<circle cx="22" cy="50" r="7" fill="url(#sun)"/>
<g filter="url(#soft)"><ellipse cx="14" cy="56" rx="4" ry="3" fill="#30a080" opacity="0.4"/></g>
</g>
</g>
<g transform="matrix(0.81200 -0.02250 0.02273 0.81591 856.400 502.175)"><g clip-path="url(#pc)">
<rect width="100" height="66" fill="url(#gC)"/>
<g filter="url(#fol)">
<ellipse cx="70" cy="26" rx="38" ry="28" fill="#758a7a" opacity="1"/>
<ellipse cx="62" cy="50" rx="36" ry="12" fill="#849386" opacity="1"/>
<ellipse cx="16" cy="62" rx="26" ry="9" fill="#637d4c" opacity="1"/>
<ellipse cx="42" cy="63" rx="16" ry="6" fill="#6c8552" opacity="1"/>
<ellipse cx="36" cy="30" rx="10" ry="12" fill="#798e77" opacity="1"/>
</g>
<g filter="url(#soft)"><ellipse cx="80" cy="60" rx="14" ry="5" fill="#f2f5f3" opacity="0.9"/></g>
<g filter="url(#soft)"><ellipse cx="60" cy="46" rx="10" ry="4" fill="#dfe6e2" opacity="0.7"/></g>
<path d="M52 34 Q75 44 100 48" stroke="#8a9490" stroke-width="2.6" opacity="0.9" fill="none" stroke-linecap="round" filter="url(#tb)"/>
<path d="M58 52 Q78 58 100 56" stroke="#909a96" stroke-width="2.2" opacity="0.85" fill="none" stroke-linecap="round" filter="url(#tb)"/>
</g>
</g>
<g transform="matrix(0.80250 0.00550 -0.02348 0.81591 975.025 498.025)"><g clip-path="url(#pc)">
<rect width="100" height="66" fill="url(#gD1)"/>
<g filter="url(#fol)">
<ellipse cx="6" cy="56" rx="9" ry="9" fill="#517c3a" opacity="1"/>
<ellipse cx="50" cy="28" rx="52" ry="30" fill="#607264" opacity="1"/>
</g>
<g filter="url(#soft)"><ellipse cx="10" cy="20" rx="6" ry="10" fill="#c4d0c8" opacity="0.7"/></g>
</g>
</g>
<g transform="matrix(0.81250 0.02100 -0.01742 0.81515 985.725 495.000)"><g clip-path="url(#pc)">
<rect width="100" height="66" fill="url(#gD2)"/>
<g filter="url(#fol)">
<ellipse cx="42" cy="30" rx="46" ry="30" fill="#5d6e60" opacity="1"/>
<ellipse cx="93" cy="30" rx="9" ry="22" fill="#496c40" opacity="1"/>
<ellipse cx="22" cy="10" rx="26" ry="10" fill="#596e59" opacity="1"/>
<ellipse cx="60" cy="40" rx="30" ry="16" fill="#647668" opacity="1"/>
<ellipse cx="6" cy="58" rx="8" ry="8" fill="#517c3a" opacity="1"/>
</g>
<g filter="url(#soft)"><ellipse cx="38" cy="28" rx="7" ry="5" fill="#dfe6e2" opacity="0.55"/></g>
<g filter="url(#soft)"><ellipse cx="52" cy="59" rx="24" ry="5" fill="#eef2ee" opacity="0.75"/></g>
<g filter="url(#soft)"><ellipse cx="80" cy="12" rx="10" ry="7" fill="#dbe8f2" opacity="0.9"/></g>
<g filter="url(#soft)"><ellipse cx="20" cy="44" rx="8" ry="5" fill="#cfd8d2" opacity="0.6"/></g>
<path d="M48 36 Q70 44 84 56 T98 66" stroke="#4e5650" stroke-width="4.8" opacity="0.63" fill="none" stroke-linecap="round" filter="url(#tb)" transform="translate(0.6 0.9)"/><path d="M48 36 Q70 44 84 56 T98 66" stroke="#98a09c" stroke-width="4" opacity="0.9" fill="none" stroke-linecap="round" filter="url(#tb)"/>
<path d="M30 30 Q50 32 66 42" stroke="#9aa4a0" stroke-width="2" opacity="0.7" fill="none" stroke-linecap="round" filter="url(#tb)"/>
<path d="M50 42 Q70 48 100 50" stroke="#9aa4a0" stroke-width="2" opacity="0.7" fill="none" stroke-linecap="round" filter="url(#tb)"/>
</g>
</g>
<g transform="matrix(0.80350 0.08150 -0.07045 0.80379 1251.125 419.725)"><g clip-path="url(#pc)">
<rect width="100" height="66" fill="url(#gE)"/>
<g filter="url(#soft)"><ellipse cx="36" cy="54" rx="22" ry="13" fill="#4e6a4a" opacity="0.85"/></g>
<g filter="url(#fol)">
<ellipse cx="38" cy="50" rx="30" ry="22" fill="#577255" opacity="1"/>
<ellipse cx="7" cy="36" rx="9" ry="28" fill="#7e8d82" opacity="1"/>
<ellipse cx="62" cy="62" rx="20" ry="9" fill="#577251" opacity="1"/>
<ellipse cx="22" cy="32" rx="10" ry="8" fill="#5f7a57" opacity="1"/>
</g>
<polygon points="0,0 100,0 100,3.5 0,10" fill="#e2ecf8" opacity="0.85"/>
</g>
<rect x=".8" y=".8" width="98.4" height="64.4" fill="none" stroke="#e6ecf0" stroke-width="2.4" opacity=".9"/>
</g>
<g transform="matrix(0.81000 0.07350 -0.06970 0.80682 1347.800 454.975)"><g clip-path="url(#pc)">
<rect width="100" height="66" fill="url(#gF)"/>
<g filter="url(#soft)"><ellipse cx="18" cy="42" rx="16" ry="20" fill="#46623f" opacity="0.85"/></g>
<g filter="url(#fol)">
<ellipse cx="20" cy="40" rx="24" ry="28" fill="#4b6845" opacity="1"/>
<ellipse cx="46" cy="58" rx="18" ry="12" fill="#51704a" opacity="1"/>
<ellipse cx="80" cy="63" rx="24" ry="7" fill="#5c8246" opacity="1"/>
<ellipse cx="30" cy="14" rx="10" ry="8" fill="#54704d" opacity="1"/>
</g>
</g>
</g>
<g transform="matrix(0.79700 0.02800 -0.04394 0.80152 1219.250 513.500)"><g clip-path="url(#pc)">
<rect width="100" height="66" fill="url(#gG)"/>
<polygon points="55,0 100,0 100,58 86,44 72,20" fill="url(#gsky2)" opacity="1"/>
<g filter="url(#soft)"><ellipse cx="60" cy="44" rx="24" ry="18" fill="#587650" opacity="0.8"/></g>
<g filter="url(#fol)">
<ellipse cx="36" cy="32" rx="36" ry="28" fill="#748872" opacity="1"/>
<ellipse cx="86" cy="52" rx="15" ry="17" fill="#5b814e" opacity="1"/>
<ellipse cx="60" cy="12" rx="20" ry="10" fill="#6d836a" opacity="1"/>
</g>
<g filter="url(#soft)"><ellipse cx="32" cy="44" rx="14" ry="9" fill="#cfd6cc" opacity="0.8"/></g>
<g filter="url(#soft)"><ellipse cx="28" cy="8" rx="14" ry="5" fill="#e4eef4" opacity="0.85"/></g>
<path d="M4 16 Q5 42 14 54 T34 64" stroke="#4e5650" stroke-width="5.3" opacity="0.665" fill="none" stroke-linecap="round" filter="url(#tb)" transform="translate(0.6 0.9)"/><path d="M4 16 Q5 42 14 54 T34 64" stroke="#a6aaaa" stroke-width="4.5" opacity="0.95" fill="none" stroke-linecap="round" filter="url(#tb)"/>
<path d="M30 62 Q40 40 50 30" stroke="#9aa29e" stroke-width="2" opacity="0.8" fill="none" stroke-linecap="round" filter="url(#tb)"/>
<path d="M62 64 Q60 48 66 36" stroke="#98a09c" stroke-width="2.2" opacity="0.8" fill="none" stroke-linecap="round" filter="url(#tb)"/>
</g>
<rect x=".8" y=".8" width="98.4" height="64.4" fill="none" stroke="#dde2e0" stroke-width="2.4" opacity=".9"/>
</g>
<g transform="matrix(0.81050 0.00550 -0.00379 0.78561 979.325 674.675)"><g clip-path="url(#pc)">
<rect width="100" height="66" fill="url(#gJ)"/>
<g filter="url(#soft)"><polygon points="12,8 62,10 66,24 50,30 14,28" fill="#e8ecea" opacity="0.95"/></g>
<g filter="url(#fol2)">
<ellipse cx="7" cy="40" rx="9" ry="28" fill="#3c5e46" opacity="1"/>
<ellipse cx="60" cy="50" rx="40" ry="12" fill="#64744a" opacity="1"/>
<ellipse cx="86" cy="26" rx="14" ry="12" fill="#788678" opacity="1"/>
<ellipse cx="34" cy="8" rx="30" ry="6" fill="#76847a" opacity="1"/>
</g>
<path d="M68 2 Q80 24 100 46" stroke="#4e5650" stroke-width="7.3" opacity="0.665" fill="none" stroke-linecap="round" filter="url(#tb)" transform="translate(0.6 0.9)"/><path d="M68 2 Q80 24 100 46" stroke="#8c949a" stroke-width="6.5" opacity="0.95" fill="none" stroke-linecap="round" filter="url(#tb)"/>
<path d="M22 12 Q38 36 62 50 T100 60" stroke="#4e5650" stroke-width="4.4" opacity="0.63" fill="none" stroke-linecap="round" filter="url(#tb)" transform="translate(0.6 0.9)"/><path d="M22 12 Q38 36 62 50 T100 60" stroke="#8a9294" stroke-width="3.6" opacity="0.9" fill="none" stroke-linecap="round" filter="url(#tb)"/>
<path d="M40 14 Q44 24 42 34" stroke="#8a9290" stroke-width="1.6" opacity="0.7" fill="none" stroke-linecap="round" filter="url(#tb)"/>
</g>
</g>
<g transform="matrix(0.81000 0.01650 -0.01212 0.81288 1068.800 629.325)"><g clip-path="url(#pc)">
<rect width="100" height="66" fill="url(#gK)"/>
<g filter="url(#fol2)">
<ellipse cx="30" cy="12" rx="34" ry="14" fill="#6c7a70" opacity="1"/>
<ellipse cx="78" cy="14" rx="24" ry="14" fill="#98a498" opacity="1"/>
<ellipse cx="90" cy="40" rx="12" ry="7" fill="#4a7044" opacity="1"/>
<ellipse cx="40" cy="56" rx="40" ry="8" fill="#5a6a3c" opacity="1"/>
</g>
<g filter="url(#soft)"><ellipse cx="32" cy="31" rx="9" ry="6.5" fill="#f0f4f4" opacity="0.95"/></g>
<g filter="url(#soft)"><ellipse cx="64" cy="20" rx="6" ry="10" fill="#ccd4cc" opacity="0.7"/></g>
<path d="M46 2 Q52 28 68 46 T94 64" stroke="#4e5650" stroke-width="7.3" opacity="0.665" fill="none" stroke-linecap="round" filter="url(#tb)" transform="translate(0.6 0.9)"/><path d="M46 2 Q52 28 68 46 T94 64" stroke="#8c9496" stroke-width="6.5" opacity="0.95" fill="none" stroke-linecap="round" filter="url(#tb)"/>
<path d="M4 26 Q16 44 42 52 T76 56" stroke="#4e5650" stroke-width="4.2" opacity="0.63" fill="none" stroke-linecap="round" filter="url(#tb)" transform="translate(0.6 0.9)"/><path d="M4 26 Q16 44 42 52 T76 56" stroke="#8e9694" stroke-width="3.4" opacity="0.9" fill="none" stroke-linecap="round" filter="url(#tb)"/>
<path d="M20 22 Q22 34 20 44" stroke="#8a9290" stroke-width="1.6" opacity="0.7" fill="none" stroke-linecap="round" filter="url(#tb)"/>
</g>
</g>
<g transform="matrix(0.81500 0.00000 0.00000 0.81212 1148.500 673.200)"><g clip-path="url(#pc)">
<rect width="100" height="66" fill="url(#gL)"/>
<g filter="url(#fol2)">
<ellipse cx="30" cy="32" rx="22" ry="8" fill="#5c7446" opacity="1"/>
<ellipse cx="50" cy="6" rx="50" ry="7" fill="#7a867c" opacity="1"/>
</g>
<g filter="url(#soft)"><ellipse cx="7" cy="22" rx="8" ry="9" fill="#e4e8e6" opacity="0.95"/></g>
<path d="M22 6 Q36 26 56 44 T74 64" stroke="#4e5650" stroke-width="8.8" opacity="0.665" fill="none" stroke-linecap="round" filter="url(#tb)" transform="translate(0.6 0.9)"/><path d="M22 6 Q36 26 56 44 T74 64" stroke="#8a9092" stroke-width="8" opacity="0.95" fill="none" stroke-linecap="round" filter="url(#tb)"/>
<path d="M0 40 Q22 44 46 40" stroke="#7c8480" stroke-width="2.8" opacity="0.85" fill="none" stroke-linecap="round" filter="url(#tb)"/>
<path d="M86 18 Q90 34 82 48" stroke="#8c9492" stroke-width="2" opacity="0.75" fill="none" stroke-linecap="round" filter="url(#tb)"/>
</g>
</g>
<g transform="matrix(0.80700 0.00000 0.00000 0.81667 1223.300 667.000)"><g clip-path="url(#pc)">
<rect width="100" height="66" fill="url(#gO)"/>
<g filter="url(#fol2)">
<ellipse cx="84" cy="14" rx="20" ry="16" fill="#48683e" opacity="1"/>
<ellipse cx="78" cy="44" rx="24" ry="9" fill="#7c7654" opacity="1"/>
<ellipse cx="20" cy="6" rx="22" ry="7" fill="#8a948c" opacity="1"/>
<ellipse cx="88" cy="60" rx="12" ry="6" fill="#8a7e58" opacity="1"/>
</g>
<g filter="url(#soft)"><ellipse cx="97" cy="2" rx="5" ry="3" fill="#e4eef4" opacity="0.9"/></g>
<g filter="url(#soft)"><ellipse cx="3" cy="30" rx="4" ry="4" fill="#d0d6d4" opacity="0.7"/></g>
<path d="M3 2 Q10 20 30 38 T64 62" stroke="#4e5650" stroke-width="8.8" opacity="0.665" fill="none" stroke-linecap="round" filter="url(#tb)" transform="translate(0.6 0.9)"/><path d="M3 2 Q10 20 30 38 T64 62" stroke="#8a8e92" stroke-width="8" opacity="0.95" fill="none" stroke-linecap="round" filter="url(#tb)"/>
<path d="M0 44 Q18 42 36 40" stroke="#7a827e" stroke-width="2.8" opacity="0.85" fill="none" stroke-linecap="round" filter="url(#tb)"/>
<path d="M58 18 Q64 32 58 48" stroke="#a0a6a4" stroke-width="2" opacity="0.75" fill="none" stroke-linecap="round" filter="url(#tb)"/>
</g>
</g>
<g transform="matrix(0.80900 0.04650 -0.04545 0.81439 1343.100 565.825)"><g clip-path="url(#pc)">
<rect width="100" height="66" fill="url(#gM)"/>
<polygon points="40,0 100,0 100,34 86,28 70,31 60,22 50,14" fill="url(#gsky)" opacity="1"/>
<g filter="url(#fol2)">
<ellipse cx="22" cy="22" rx="26" ry="24" fill="#3e503e" opacity="1"/>
<ellipse cx="84" cy="48" rx="18" ry="18" fill="#3f6a3a" opacity="1"/>
<ellipse cx="58" cy="40" rx="14" ry="10" fill="#4a6a40" opacity="1"/>
<ellipse cx="6" cy="58" rx="10" ry="8" fill="#5e7a44" opacity="1"/>
</g>
<g filter="url(#soft)"><ellipse cx="6" cy="36" rx="6" ry="10" fill="#a4aca4" opacity="0.7"/></g>
<path d="M27 34 Q32 48 26 64" stroke="#aeb2b0" stroke-width="2.6" opacity="0.95" fill="none" stroke-linecap="round" filter="url(#tb)"/>
<path d="M12 40 Q16 46 14 52" stroke="#a4aaa6" stroke-width="1.4" opacity="0.7" fill="none" stroke-linecap="round" filter="url(#tb)"/>
</g>
</g>
<g transform="matrix(0.81000 0.02800 -0.03030 0.81515 1340.050 657.100)"><g clip-path="url(#pc)">
<rect width="100" height="66" fill="url(#gN)"/>
<polygon points="56,0 100,0 100,10 60,9" fill="#c4d4d4" opacity="1"/>
<g filter="url(#fol2)">
<ellipse cx="84" cy="46" rx="18" ry="26" fill="#285c40" opacity="1"/>
<ellipse cx="72" cy="20" rx="28" ry="12" fill="#3a5a3a" opacity="1"/>
<ellipse cx="22" cy="12" rx="26" ry="14" fill="#3c4a3c" opacity="1"/>
<ellipse cx="30" cy="58" rx="32" ry="10" fill="#3a3a36" opacity="1"/>
</g>
<g filter="url(#soft)"><ellipse cx="6" cy="20" rx="5" ry="8" fill="#9aa49c" opacity="0.6"/></g>
<path d="M28 18 Q32 34 27 50" stroke="#a0a4a2" stroke-width="2.6" opacity="0.9" fill="none" stroke-linecap="round" filter="url(#tb)"/>
<path d="M0 46 Q30 52 60 58" stroke="#4e5650" stroke-width="5.8" opacity="0.56" fill="none" stroke-linecap="round" filter="url(#tb)" transform="translate(0.6 0.9)"/><path d="M0 46 Q30 52 60 58" stroke="#56564e" stroke-width="5" opacity="0.8" fill="none" stroke-linecap="round" filter="url(#tb)"/>
</g>
</g>
<g transform="matrix(0.79650 -0.15050 0.16136 0.78258 1361.425 806.175)"><g clip-path="url(#pc)">
<rect width="100" height="66" fill="url(#gQ)"/>
<g filter="url(#fol2)">
<ellipse cx="30" cy="20" rx="22" ry="10" fill="#3c4a34" opacity="1"/>
<ellipse cx="84" cy="30" rx="18" ry="22" fill="#423a4a" opacity="1"/>
<ellipse cx="60" cy="50" rx="30" ry="10" fill="#424042" opacity="1"/>
<ellipse cx="60" cy="14" rx="14" ry="6" fill="#36482c" opacity="1"/>
</g>
</g>
</g>
<g transform="matrix(0.79950 -0.12800 0.14470 0.78788 1348.525 839.050)"><g clip-path="url(#pc)">
<rect width="100" height="66" fill="url(#gR)"/>
<g filter="url(#fol2)">
<ellipse cx="50" cy="14" rx="44" ry="12" fill="#42582f" opacity="1"/>
<ellipse cx="22" cy="40" rx="18" ry="8" fill="#26361e" opacity="1"/>
<ellipse cx="75" cy="30" rx="22" ry="8" fill="#304428" opacity="1"/>
</g>
<g filter="url(#soft)"><polygon points="4,52 40,46 100,40 100,47 50,55 30,66 8,66" fill="#5e5c66" opacity="0.9"/></g>
<g filter="url(#soft)"><ellipse cx="20" cy="61" rx="12" ry="3.5" fill="#84808a" opacity="0.75"/></g>
<g filter="url(#fol2)">
<ellipse cx="72" cy="58" rx="24" ry="8" fill="#32462a" opacity="1"/>
</g>
</g>
</g>
<g transform="matrix(0.81300 0.01100 -0.01212 0.81515 1334.500 750.100)"><g clip-path="url(#pc)">
<rect width="100" height="66" fill="url(#gP)"/>
<g filter="url(#fol2)">
<ellipse cx="82" cy="36" rx="20" ry="34" fill="#2a5c3a" opacity="1"/>
<ellipse cx="14" cy="24" rx="20" ry="7" fill="#585850" opacity="1"/>
<ellipse cx="12" cy="5" rx="16" ry="7" fill="#42642f" opacity="1"/>
<ellipse cx="38" cy="54" rx="18" ry="9" fill="#7c5c38" opacity="1"/>
<ellipse cx="8" cy="58" rx="12" ry="10" fill="#2e2a24" opacity="1"/>
<ellipse cx="46" cy="18" rx="12" ry="14" fill="#6e6444" opacity="1"/>
</g>
<path d="M18 6 Q24 14 22 24" stroke="#8a8e88" stroke-width="1.8" opacity="0.7" fill="none" stroke-linecap="round" filter="url(#tb)"/>
</g>
</g>
<path d="M647.50 302V1008M698.25 302V1008M749.00 302V1008M799.75 302V1008M850.50 302V1008M901.25 302V1008M952.00 302V1008M1002.75 302V1008M1053.50 302V1008M1104.25 302V1008M1155.00 302V1008M1205.75 302V1008M1256.50 302V1008M1307.25 302V1008M1358.00 302V1008M1408.75 302V1008M1459.50 302V1008M1510.25 302V1008M1561.00 302V1008M1611.75 302V1008" stroke="#48ffff" stroke-opacity=".74" stroke-width="2" fill="none"/>
<path d="M626 327.00H1639M626 377.15H1639M626 427.30H1639M626 477.45H1639M626 527.60H1639M626 577.75H1639M626 627.90H1639M626 678.05H1639M626 728.20H1639M626 778.35H1639M626 828.50H1639M626 878.65H1639M626 928.80H1639M626 978.95H1639" stroke="#26ffff" stroke-opacity=".86" stroke-width="2" fill="none"/>
<path d="M1185.5 501.2 L1185.5 518.8 L1189.8 517.4 L1191.8 522 L1194.8 520.6 L1192.9 515.6 L1197.8 514 Z" fill="#484848" stroke="#e4e4e4" stroke-width=".9" stroke-linejoin="round"/>
</g></svg>
<div class="abs" style="left:372.00px;top:1048.00px;width:1557.00px;height:1.00px;background:#a6a7a9;"></div>
<div class="abs" style="left:65.00px;top:1048.60px;width:1864.00px;height:25.00px;background:#eff0f1;"></div>
<div class="abs" style="left:372.00px;top:1048.00px;width:1557.00px;height:1.00px;background:#a6a7a9;"></div>
<div class="t" style="left:69.80px;top:1054.67px;letter-spacing:0.56px;word-spacing:-0.7px;">Cliquer sur une connexion pour éditer des points de contrôle.</div>
<div class="t" style="left:1762.40px;top:1054.67px;letter-spacing:0.07px;word-spacing:-0.7px;">179,0 x 124,9</div>
<svg style="left:1906px;top:1050px" width="22" height="22" viewBox="1906 1050 22 22"><path d="M1906.3 1070.3 L1924.8 1052.3 M1911.3 1070.3 L1924.8 1057.3 M1916.3 1070.3 L1924.8 1062.3 M1921.3 1070.3 L1924.8 1067.3" stroke="#a3a4a6" stroke-width="1.1" fill="none"/></svg>
</body></html>
